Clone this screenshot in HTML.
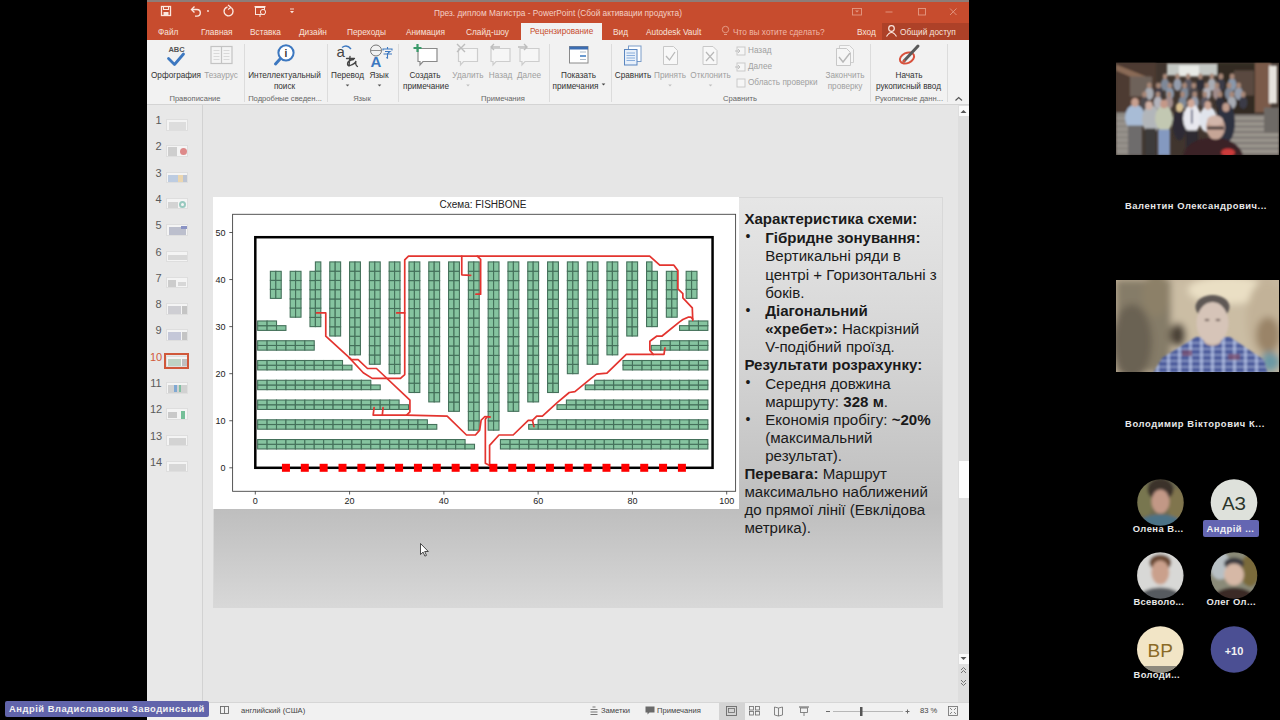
<!DOCTYPE html><html><head><meta charset="utf-8"><style>
*{margin:0;padding:0;box-sizing:border-box}
html,body{width:1280px;height:720px;overflow:hidden;background:#000;font-family:"Liberation Sans",sans-serif}
.a{position:absolute}
.t{position:absolute;white-space:nowrap;line-height:1}
svg{position:absolute;left:0;top:0}
</style></head><body>
<div class="a" style="left:147px;top:0;width:822px;height:720px;background:#e6e6e6"></div>
<div class="a" style="left:147px;top:0;width:822px;height:2px;background:#8d7d78"></div>
<div class="a" style="left:147px;top:2px;width:822px;height:38px;background:#c74c2e"></div>
<div class="a" style="left:882px;top:23px;width:87px;height:17px;background:#ad4128"></div>
<div class="a" style="left:521px;top:23px;width:81px;height:18px;background:#f2f2f2"></div>
<div class="a" style="left:147px;top:40px;width:822px;height:65px;background:#f2f2f2;border-bottom:1px solid #d4d4d4"></div>
<div class="t" style="left:158px;top:28px;font-size:8.3px;color:#f8e3dc;">Файл</div>
<div class="t" style="left:201px;top:28px;font-size:8.3px;color:#f8e3dc;">Главная</div>
<div class="t" style="left:250px;top:28px;font-size:8.3px;color:#f8e3dc;">Вставка</div>
<div class="t" style="left:299px;top:28px;font-size:8.3px;color:#f8e3dc;">Дизайн</div>
<div class="t" style="left:347px;top:28px;font-size:8.3px;color:#f8e3dc;">Переходы</div>
<div class="t" style="left:406px;top:28px;font-size:8.3px;color:#f8e3dc;">Анимация</div>
<div class="t" style="left:466px;top:28px;font-size:8.3px;color:#f8e3dc;">Слайд-шоу</div>
<div class="t" style="left:613px;top:28px;font-size:8.3px;color:#f8e3dc;">Вид</div>
<div class="t" style="left:646px;top:28px;font-size:8.3px;color:#f8e3dc;">Autodesk Vault</div>
<div class="t" style="left:733px;top:28px;font-size:8.3px;color:#f0b8a8;">Что вы хотите сделать?</div>
<div class="t" style="left:857px;top:28px;font-size:8.3px;color:#f8e3dc;">Вход</div>
<div class="t" style="left:900px;top:28px;font-size:8.3px;color:#f8e3dc;">Общий доступ</div>
<div class="t" style="left:530px;top:28px;font-size:8.2px;color:#c74c2e;">Рецензирование</div>
<div class="t" style="left:434px;top:9px;font-size:8.3px;color:#f3d0c5;">През. диплом Магистра - PowerPoint (Сбой активации продукта)</div>
<div class="t" style="left:176px;top:71.8px;font-size:8.2px;color:#333;transform:translateX(-50%);">Орфография</div>
<div class="t" style="left:221px;top:71.8px;font-size:8.2px;color:#a0a0a0;transform:translateX(-50%);">Тезаурус</div>
<div class="t" style="left:284.5px;top:71.8px;font-size:8.2px;color:#333;transform:translateX(-50%);">Интеллектуальный</div>
<div class="t" style="left:284.5px;top:82.8px;font-size:8.2px;color:#333;transform:translateX(-50%);">поиск</div>
<div class="t" style="left:347.5px;top:71.8px;font-size:8.2px;color:#333;transform:translateX(-50%);">Перевод</div>
<div class="t" style="left:379px;top:71.8px;font-size:8.2px;color:#333;transform:translateX(-50%);">Язык</div>
<div class="t" style="left:425px;top:71.8px;font-size:8.2px;color:#333;transform:translateX(-50%);">Создать</div>
<div class="t" style="left:426px;top:82.8px;font-size:8.2px;color:#333;transform:translateX(-50%);">примечание</div>
<div class="t" style="left:468px;top:71.8px;font-size:8.2px;color:#a0a0a0;transform:translateX(-50%);">Удалить</div>
<div class="t" style="left:500.5px;top:71.8px;font-size:8.2px;color:#a0a0a0;transform:translateX(-50%);">Назад</div>
<div class="t" style="left:529px;top:71.8px;font-size:8.2px;color:#a0a0a0;transform:translateX(-50%);">Далее</div>
<div class="t" style="left:578.5px;top:71.8px;font-size:8.2px;color:#333;transform:translateX(-50%);">Показать</div>
<div class="t" style="left:575.5px;top:82.8px;font-size:8.2px;color:#333;transform:translateX(-50%);">примечания</div>
<div class="t" style="left:633px;top:71.8px;font-size:8.2px;color:#333;transform:translateX(-50%);">Сравнить</div>
<div class="t" style="left:670px;top:71.8px;font-size:8.2px;color:#a0a0a0;transform:translateX(-50%);">Принять</div>
<div class="t" style="left:710.5px;top:71.8px;font-size:8.2px;color:#a0a0a0;transform:translateX(-50%);">Отклонить</div>
<div class="t" style="left:845px;top:71.8px;font-size:8.2px;color:#a0a0a0;transform:translateX(-50%);">Закончить</div>
<div class="t" style="left:845px;top:82.8px;font-size:8.2px;color:#a0a0a0;transform:translateX(-50%);">проверку</div>
<div class="t" style="left:909px;top:71.8px;font-size:8.2px;color:#333;transform:translateX(-50%);">Начать</div>
<div class="t" style="left:908.5px;top:82.8px;font-size:8.2px;color:#333;transform:translateX(-50%);">рукописный ввод</div>
<div class="t" style="left:748px;top:46.5px;font-size:8.2px;color:#a0a0a0;">Назад</div>
<div class="t" style="left:748px;top:62.5px;font-size:8.2px;color:#a0a0a0;">Далее</div>
<div class="t" style="left:748px;top:78.5px;font-size:8.2px;color:#a0a0a0;">Область проверки</div>
<div class="t" style="left:195px;top:95.2px;font-size:7.6px;color:#666;transform:translateX(-50%);">Правописание</div>
<div class="t" style="left:285px;top:95.2px;font-size:7.6px;color:#666;transform:translateX(-50%);">Подробные сведен...</div>
<div class="t" style="left:362px;top:95.2px;font-size:7.6px;color:#666;transform:translateX(-50%);">Язык</div>
<div class="t" style="left:503px;top:95.2px;font-size:7.6px;color:#666;transform:translateX(-50%);">Примечания</div>
<div class="t" style="left:740px;top:95.2px;font-size:7.6px;color:#666;transform:translateX(-50%);">Сравнить</div>
<div class="t" style="left:909px;top:95.2px;font-size:7.6px;color:#666;transform:translateX(-50%);">Рукописные данн...</div>
<div class="a" style="left:243.5px;top:44px;width:1px;height:58px;background:#dcdcdc"></div>
<div class="a" style="left:326.5px;top:44px;width:1px;height:58px;background:#dcdcdc"></div>
<div class="a" style="left:397.5px;top:44px;width:1px;height:58px;background:#dcdcdc"></div>
<div class="a" style="left:549px;top:44px;width:1px;height:58px;background:#dcdcdc"></div>
<div class="a" style="left:610.5px;top:44px;width:1px;height:58px;background:#dcdcdc"></div>
<div class="a" style="left:870px;top:44px;width:1px;height:58px;background:#dcdcdc"></div>
<div class="a" style="left:947px;top:44px;width:1px;height:58px;background:#dcdcdc"></div>
<div class="a" style="left:147px;top:105px;width:56px;height:598px;background:#e8e8e8;border-right:1px solid #d2d2d2"></div>
<div class="t" style="left:158.5px;top:115.0px;font-size:11px;color:#5a5a5a;transform:translateX(-50%);">1</div>
<div class="a" style="left:166px;top:119.0px;width:22px;height:11.5px;background:#f4f4f4;border:1px solid #dedede;overflow:hidden"><div style="position:absolute;left:0;top:0;width:20px;height:10px;opacity:0.62;filter:blur(0.4px)"><div style="position:absolute;left:2px;top:2px;width:17px;height:8px;background:#cfcfcf"></div></div></div>
<div class="t" style="left:158.5px;top:141.3px;font-size:11px;color:#5a5a5a;transform:translateX(-50%);">2</div>
<div class="a" style="left:166px;top:145.3px;width:22px;height:11.5px;background:#f4f4f4;border:1px solid #dedede;overflow:hidden"><div style="position:absolute;left:0;top:0;width:20px;height:10px;opacity:0.62;filter:blur(0.4px)"><div style="position:absolute;left:1px;top:1px;width:9px;height:10px;background:#b8b8b8"></div><div style="position:absolute;left:13px;top:2px;width:7px;height:7px;border-radius:50%;background:#d04848"></div></div></div>
<div class="t" style="left:158.5px;top:167.6px;font-size:11px;color:#5a5a5a;transform:translateX(-50%);">3</div>
<div class="a" style="left:166px;top:171.6px;width:22px;height:11.5px;background:#f4f4f4;border:1px solid #dedede;overflow:hidden"><div style="position:absolute;left:0;top:0;width:20px;height:10px;opacity:0.62;filter:blur(0.4px)"><div style="position:absolute;left:1px;top:2px;width:10px;height:8px;background:#9cb4d6"></div><div style="position:absolute;left:11px;top:2px;width:5px;height:8px;background:#e6c488"></div><div style="position:absolute;left:16px;top:2px;width:4px;height:8px;background:#9aa8c0"></div></div></div>
<div class="t" style="left:158.5px;top:193.9px;font-size:11px;color:#5a5a5a;transform:translateX(-50%);">4</div>
<div class="a" style="left:166px;top:197.9px;width:22px;height:11.5px;background:#f4f4f4;border:1px solid #dedede;overflow:hidden"><div style="position:absolute;left:0;top:0;width:20px;height:10px;opacity:0.62;filter:blur(0.4px)"><div style="position:absolute;left:1px;top:3px;width:10px;height:6px;background:#c0c0c0"></div><div style="position:absolute;left:12px;top:2px;width:7px;height:7px;border-radius:50%;border:2px solid #60b0a0"></div></div></div>
<div class="t" style="left:158.5px;top:220.2px;font-size:11px;color:#5a5a5a;transform:translateX(-50%);">5</div>
<div class="a" style="left:166px;top:224.2px;width:22px;height:11.5px;background:#f4f4f4;border:1px solid #dedede;overflow:hidden"><div style="position:absolute;left:0;top:0;width:20px;height:10px;opacity:0.62;filter:blur(0.4px)"><div style="position:absolute;left:2px;top:2px;width:17px;height:8px;background:#9aa0b6"></div><div style="position:absolute;left:14px;top:1px;width:6px;height:3px;background:#4a58a8"></div></div></div>
<div class="t" style="left:158.5px;top:246.5px;font-size:11px;color:#5a5a5a;transform:translateX(-50%);">6</div>
<div class="a" style="left:166px;top:250.5px;width:22px;height:11.5px;background:#f4f4f4;border:1px solid #dedede;overflow:hidden"><div style="position:absolute;left:0;top:0;width:20px;height:10px;opacity:0.62;filter:blur(0.4px)"><div style="position:absolute;left:1px;top:3px;width:19px;height:5px;background:#c8c8c8"></div></div></div>
<div class="t" style="left:158.5px;top:272.8px;font-size:11px;color:#5a5a5a;transform:translateX(-50%);">7</div>
<div class="a" style="left:166px;top:276.8px;width:22px;height:11.5px;background:#f4f4f4;border:1px solid #dedede;overflow:hidden"><div style="position:absolute;left:0;top:0;width:20px;height:10px;opacity:0.62;filter:blur(0.4px)"><div style="position:absolute;left:1px;top:2px;width:8px;height:8px;background:#b4b4b4"></div><div style="position:absolute;left:11px;top:4px;width:8px;height:4px;background:#c6c6c6"></div></div></div>
<div class="t" style="left:158.5px;top:299.1px;font-size:11px;color:#5a5a5a;transform:translateX(-50%);">8</div>
<div class="a" style="left:166px;top:303.1px;width:22px;height:11.5px;background:#f4f4f4;border:1px solid #dedede;overflow:hidden"><div style="position:absolute;left:0;top:0;width:20px;height:10px;opacity:0.62;filter:blur(0.4px)"><div style="position:absolute;left:1px;top:2px;width:13px;height:8px;background:#b8b8c0"></div><div style="position:absolute;left:15px;top:2px;width:5px;height:8px;background:#a8a8a8"></div></div></div>
<div class="t" style="left:158.5px;top:325.4px;font-size:11px;color:#5a5a5a;transform:translateX(-50%);">9</div>
<div class="a" style="left:166px;top:329.4px;width:22px;height:11.5px;background:#f4f4f4;border:1px solid #dedede;overflow:hidden"><div style="position:absolute;left:0;top:0;width:20px;height:10px;opacity:0.62;filter:blur(0.4px)"><div style="position:absolute;left:1px;top:2px;width:13px;height:8px;background:#a8acc8"></div><div style="position:absolute;left:15px;top:2px;width:5px;height:8px;background:#a8a8a8"></div></div></div>
<div class="t" style="left:156px;top:351.70000000000005px;font-size:11px;color:#d2583a;transform:translateX(-50%);">10</div>
<div class="a" style="left:166px;top:355.7px;width:22px;height:11.5px;background:#f4f4f4;border:1px solid #dedede;overflow:hidden"><div style="position:absolute;left:0;top:0;width:20px;height:10px;opacity:0.62;filter:blur(0.4px)"><div style="position:absolute;left:1px;top:2px;width:13px;height:8px;background:#9ec0a8"></div><div style="position:absolute;left:15px;top:2px;width:5px;height:8px;background:#a0a0a0"></div></div></div>
<div class="t" style="left:156px;top:378.0px;font-size:11px;color:#5a5a5a;transform:translateX(-50%);">11</div>
<div class="a" style="left:166px;top:382.0px;width:22px;height:11.5px;background:#f4f4f4;border:1px solid #dedede;overflow:hidden"><div style="position:absolute;left:0;top:0;width:20px;height:10px;opacity:0.62;filter:blur(0.4px)"><div style="position:absolute;left:1px;top:2px;width:19px;height:8px;background:#bcbcbc"></div><div style="position:absolute;left:7px;top:2px;width:3px;height:7px;background:#3a7ac0"></div><div style="position:absolute;left:12px;top:2px;width:2px;height:7px;background:#3aa070"></div></div></div>
<div class="t" style="left:156px;top:404.3px;font-size:11px;color:#5a5a5a;transform:translateX(-50%);">12</div>
<div class="a" style="left:166px;top:408.3px;width:22px;height:11.5px;background:#f4f4f4;border:1px solid #dedede;overflow:hidden"><div style="position:absolute;left:0;top:0;width:20px;height:10px;opacity:0.62;filter:blur(0.4px)"><div style="position:absolute;left:1px;top:3px;width:9px;height:6px;background:#b0b0b0"></div><div style="position:absolute;left:14px;top:2px;width:4px;height:8px;background:#28a060"></div></div></div>
<div class="t" style="left:156px;top:430.6px;font-size:11px;color:#5a5a5a;transform:translateX(-50%);">13</div>
<div class="a" style="left:166px;top:434.6px;width:22px;height:11.5px;background:#f4f4f4;border:1px solid #dedede;overflow:hidden"><div style="position:absolute;left:0;top:0;width:20px;height:10px;opacity:0.62;filter:blur(0.4px)"><div style="position:absolute;left:2px;top:2px;width:17px;height:8px;background:#c0c0c0"></div></div></div>
<div class="t" style="left:156px;top:456.90000000000003px;font-size:11px;color:#5a5a5a;transform:translateX(-50%);">14</div>
<div class="a" style="left:166px;top:460.9px;width:22px;height:11.5px;background:#f4f4f4;border:1px solid #dedede;overflow:hidden"><div style="position:absolute;left:0;top:0;width:20px;height:10px;opacity:0.62;filter:blur(0.4px)"><div style="position:absolute;left:2px;top:2px;width:17px;height:8px;background:#c6c6c6"></div></div></div>
<div class="a" style="left:164.3px;top:352.8px;width:25px;height:16px;border:2px solid #d0583a"></div>
<div class="a" style="left:204px;top:105px;width:754px;height:597px;background:#e6e6e6"></div>
<div class="a" style="left:213px;top:197px;width:730px;height:411px;background:linear-gradient(180deg,#e6e6e6 0%,#d4d4d4 40%,#bebebe 76%,#d8d8d8 100%);border:1px solid #d8d8d8"></div>
<div class="a" style="left:958px;top:105px;width:11px;height:597px;background:#dedede"></div>
<div class="a" style="left:958.5px;top:106px;width:10px;height:10px;background:#fafafa"></div>
<div class="a" style="left:958.5px;top:461px;width:10px;height:37px;background:#fdfdfd"></div>
<div class="a" style="left:958.5px;top:654px;width:10px;height:10px;background:#fafafa"></div>
<div class="a" style="left:147px;top:702px;width:822px;height:18px;background:#f1f1f1;border-top:1px solid #d6d6d6"></div>
<div class="t" style="left:241px;top:707px;font-size:7.6px;color:#444;">английский (США)</div>
<div class="t" style="left:601px;top:707px;font-size:7.6px;color:#444;">Заметки</div>
<div class="t" style="left:657px;top:707px;font-size:7.6px;color:#444;">Примечания</div>
<div class="t" style="left:920px;top:707px;font-size:7.6px;color:#444;">83 %</div>
<div class="a" style="left:719px;top:703px;width:26px;height:17px;background:#d4d4d4"></div>
<div class="t" style="left:744.4px;top:210.9px;font-size:15.1px;color:#1a1a1a"><b>Характеристика схеми:</b></div>
<div class="t" style="left:765.2px;top:229.8px;font-size:15.1px;color:#1a1a1a"><b>Гібридне зонування:</b></div>
<div class="t" style="left:765.2px;top:248.4px;font-size:15.1px;color:#1a1a1a">Вертикальні ряди в</div>
<div class="t" style="left:765.2px;top:266.6px;font-size:15.1px;color:#1a1a1a">центрі + Горизонтальні з</div>
<div class="t" style="left:765.2px;top:284.8px;font-size:15.1px;color:#1a1a1a">боків.</div>
<div class="t" style="left:765.2px;top:303.0px;font-size:15.1px;color:#1a1a1a"><b>Діагональний</b></div>
<div class="t" style="left:765.2px;top:321.2px;font-size:15.1px;color:#1a1a1a"><b>«хребет»:</b> Наскрізний</div>
<div class="t" style="left:765.2px;top:339.4px;font-size:15.1px;color:#1a1a1a">V-подібний проїзд.</div>
<div class="t" style="left:744.4px;top:357.4px;font-size:15.1px;color:#1a1a1a"><b>Результати розрахунку:</b></div>
<div class="t" style="left:765.2px;top:375.6px;font-size:15.1px;color:#1a1a1a">Середня довжина</div>
<div class="t" style="left:765.2px;top:393.8px;font-size:15.1px;color:#1a1a1a">маршруту: <b>328 м</b>.</div>
<div class="t" style="left:765.2px;top:412.2px;font-size:15.1px;color:#1a1a1a">Економія пробігу: <b>~20%</b></div>
<div class="t" style="left:765.2px;top:430.4px;font-size:15.1px;color:#1a1a1a">(максимальний</div>
<div class="t" style="left:765.2px;top:448.4px;font-size:15.1px;color:#1a1a1a">результат).</div>
<div class="t" style="left:744.4px;top:466.4px;font-size:15.1px;color:#1a1a1a"><b>Перевага:</b> Маршрут</div>
<div class="t" style="left:744.4px;top:484.4px;font-size:15.1px;color:#1a1a1a">максимально наближений</div>
<div class="t" style="left:744.4px;top:502.3px;font-size:15.1px;color:#1a1a1a">до прямої лінії (Евклідова</div>
<div class="t" style="left:744.4px;top:520.3px;font-size:15.1px;color:#1a1a1a">метрика).</div>
<div class="t" style="left:745.5px;top:229.3px;font-size:14px;color:#1a1a1a">•</div>
<div class="t" style="left:745.5px;top:302.5px;font-size:14px;color:#1a1a1a">•</div>
<div class="t" style="left:745.5px;top:375.1px;font-size:14px;color:#1a1a1a">•</div>
<div class="t" style="left:745.5px;top:411.7px;font-size:14px;color:#1a1a1a">•</div>
<svg width="1280" height="720" viewBox="0 0 1280 720" style="font-family:'Liberation Sans',sans-serif">
<rect x="213" y="197" width="526" height="312" fill="#ffffff"/>
<rect x="232.6" y="214.3" width="503" height="277" fill="none" stroke="#444" stroke-width="0.9"/>
<line x1="255.30" y1="491.2" x2="255.30" y2="494.5" stroke="#333" stroke-width="0.8"/>
<text x="255.30" y="504" font-size="9" text-anchor="middle" fill="#222">0</text>
<line x1="349.58" y1="491.2" x2="349.58" y2="494.5" stroke="#333" stroke-width="0.8"/>
<text x="349.58" y="504" font-size="9" text-anchor="middle" fill="#222">20</text>
<line x1="443.86" y1="491.2" x2="443.86" y2="494.5" stroke="#333" stroke-width="0.8"/>
<text x="443.86" y="504" font-size="9" text-anchor="middle" fill="#222">40</text>
<line x1="538.14" y1="491.2" x2="538.14" y2="494.5" stroke="#333" stroke-width="0.8"/>
<text x="538.14" y="504" font-size="9" text-anchor="middle" fill="#222">60</text>
<line x1="632.42" y1="491.2" x2="632.42" y2="494.5" stroke="#333" stroke-width="0.8"/>
<text x="632.42" y="504" font-size="9" text-anchor="middle" fill="#222">80</text>
<line x1="726.70" y1="491.2" x2="726.70" y2="494.5" stroke="#333" stroke-width="0.8"/>
<text x="726.70" y="504" font-size="9" text-anchor="middle" fill="#222">100</text>
<line x1="229.3" y1="467.80" x2="232.6" y2="467.80" stroke="#333" stroke-width="0.8"/>
<text x="225.5" y="471.00" font-size="9" text-anchor="end" fill="#222">0</text>
<line x1="229.3" y1="420.74" x2="232.6" y2="420.74" stroke="#333" stroke-width="0.8"/>
<text x="225.5" y="423.94" font-size="9" text-anchor="end" fill="#222">10</text>
<line x1="229.3" y1="373.68" x2="232.6" y2="373.68" stroke="#333" stroke-width="0.8"/>
<text x="225.5" y="376.88" font-size="9" text-anchor="end" fill="#222">20</text>
<line x1="229.3" y1="326.62" x2="232.6" y2="326.62" stroke="#333" stroke-width="0.8"/>
<text x="225.5" y="329.82" font-size="9" text-anchor="end" fill="#222">30</text>
<line x1="229.3" y1="279.56" x2="232.6" y2="279.56" stroke="#333" stroke-width="0.8"/>
<text x="225.5" y="282.76" font-size="9" text-anchor="end" fill="#222">40</text>
<line x1="229.3" y1="232.50" x2="232.6" y2="232.50" stroke="#333" stroke-width="0.8"/>
<text x="225.5" y="235.70" font-size="9" text-anchor="end" fill="#222">50</text>
<text x="483" y="208" font-size="10" text-anchor="middle" fill="#222">Схема: FISHBONE</text>
<rect x="270.38" y="289.36" width="5.42" height="9.02" fill="#86c4a0" stroke="#44705a" stroke-width="1.1"/>
<rect x="270.38" y="280.34" width="5.42" height="9.02" fill="#86c4a0" stroke="#44705a" stroke-width="1.1"/>
<rect x="270.38" y="271.32" width="5.42" height="9.02" fill="#86c4a0" stroke="#44705a" stroke-width="1.1"/>
<rect x="275.81" y="289.36" width="5.42" height="9.02" fill="#86c4a0" stroke="#44705a" stroke-width="1.1"/>
<rect x="275.81" y="280.34" width="5.42" height="9.02" fill="#86c4a0" stroke="#44705a" stroke-width="1.1"/>
<rect x="275.81" y="271.32" width="5.42" height="9.02" fill="#86c4a0" stroke="#44705a" stroke-width="1.1"/>
<rect x="290.18" y="308.03" width="5.42" height="9.18" fill="#86c4a0" stroke="#44705a" stroke-width="1.1"/>
<rect x="290.18" y="298.85" width="5.42" height="9.18" fill="#86c4a0" stroke="#44705a" stroke-width="1.1"/>
<rect x="290.18" y="289.68" width="5.42" height="9.18" fill="#86c4a0" stroke="#44705a" stroke-width="1.1"/>
<rect x="290.18" y="280.50" width="5.42" height="9.18" fill="#86c4a0" stroke="#44705a" stroke-width="1.1"/>
<rect x="290.18" y="271.32" width="5.42" height="9.18" fill="#86c4a0" stroke="#44705a" stroke-width="1.1"/>
<rect x="295.60" y="308.03" width="5.42" height="9.18" fill="#86c4a0" stroke="#44705a" stroke-width="1.1"/>
<rect x="295.60" y="298.85" width="5.42" height="9.18" fill="#86c4a0" stroke="#44705a" stroke-width="1.1"/>
<rect x="295.60" y="289.68" width="5.42" height="9.18" fill="#86c4a0" stroke="#44705a" stroke-width="1.1"/>
<rect x="295.60" y="280.50" width="5.42" height="9.18" fill="#86c4a0" stroke="#44705a" stroke-width="1.1"/>
<rect x="295.60" y="271.32" width="5.42" height="9.18" fill="#86c4a0" stroke="#44705a" stroke-width="1.1"/>
<rect x="309.98" y="317.40" width="5.42" height="9.22" fill="#86c4a0" stroke="#44705a" stroke-width="1.1"/>
<rect x="309.98" y="308.19" width="5.42" height="9.22" fill="#86c4a0" stroke="#44705a" stroke-width="1.1"/>
<rect x="309.98" y="298.97" width="5.42" height="9.22" fill="#86c4a0" stroke="#44705a" stroke-width="1.1"/>
<rect x="309.98" y="289.76" width="5.42" height="9.22" fill="#86c4a0" stroke="#44705a" stroke-width="1.1"/>
<rect x="309.98" y="280.54" width="5.42" height="9.22" fill="#86c4a0" stroke="#44705a" stroke-width="1.1"/>
<rect x="309.98" y="271.32" width="5.42" height="9.22" fill="#86c4a0" stroke="#44705a" stroke-width="1.1"/>
<rect x="315.40" y="317.38" width="5.42" height="9.24" fill="#86c4a0" stroke="#44705a" stroke-width="1.1"/>
<rect x="315.40" y="308.13" width="5.42" height="9.24" fill="#86c4a0" stroke="#44705a" stroke-width="1.1"/>
<rect x="315.40" y="298.89" width="5.42" height="9.24" fill="#86c4a0" stroke="#44705a" stroke-width="1.1"/>
<rect x="315.40" y="289.64" width="5.42" height="9.24" fill="#86c4a0" stroke="#44705a" stroke-width="1.1"/>
<rect x="315.40" y="280.40" width="5.42" height="9.24" fill="#86c4a0" stroke="#44705a" stroke-width="1.1"/>
<rect x="315.40" y="271.16" width="5.42" height="9.24" fill="#86c4a0" stroke="#44705a" stroke-width="1.1"/>
<rect x="315.40" y="261.91" width="5.42" height="9.24" fill="#86c4a0" stroke="#44705a" stroke-width="1.1"/>
<rect x="329.78" y="326.77" width="5.42" height="9.26" fill="#86c4a0" stroke="#44705a" stroke-width="1.1"/>
<rect x="329.78" y="317.50" width="5.42" height="9.26" fill="#86c4a0" stroke="#44705a" stroke-width="1.1"/>
<rect x="329.78" y="308.24" width="5.42" height="9.26" fill="#86c4a0" stroke="#44705a" stroke-width="1.1"/>
<rect x="329.78" y="298.97" width="5.42" height="9.26" fill="#86c4a0" stroke="#44705a" stroke-width="1.1"/>
<rect x="329.78" y="289.71" width="5.42" height="9.26" fill="#86c4a0" stroke="#44705a" stroke-width="1.1"/>
<rect x="329.78" y="280.44" width="5.42" height="9.26" fill="#86c4a0" stroke="#44705a" stroke-width="1.1"/>
<rect x="329.78" y="271.18" width="5.42" height="9.26" fill="#86c4a0" stroke="#44705a" stroke-width="1.1"/>
<rect x="329.78" y="261.91" width="5.42" height="9.26" fill="#86c4a0" stroke="#44705a" stroke-width="1.1"/>
<rect x="335.20" y="326.77" width="5.42" height="9.26" fill="#86c4a0" stroke="#44705a" stroke-width="1.1"/>
<rect x="335.20" y="317.50" width="5.42" height="9.26" fill="#86c4a0" stroke="#44705a" stroke-width="1.1"/>
<rect x="335.20" y="308.24" width="5.42" height="9.26" fill="#86c4a0" stroke="#44705a" stroke-width="1.1"/>
<rect x="335.20" y="298.97" width="5.42" height="9.26" fill="#86c4a0" stroke="#44705a" stroke-width="1.1"/>
<rect x="335.20" y="289.71" width="5.42" height="9.26" fill="#86c4a0" stroke="#44705a" stroke-width="1.1"/>
<rect x="335.20" y="280.44" width="5.42" height="9.26" fill="#86c4a0" stroke="#44705a" stroke-width="1.1"/>
<rect x="335.20" y="271.18" width="5.42" height="9.26" fill="#86c4a0" stroke="#44705a" stroke-width="1.1"/>
<rect x="335.20" y="261.91" width="5.42" height="9.26" fill="#86c4a0" stroke="#44705a" stroke-width="1.1"/>
<rect x="349.58" y="345.56" width="5.42" height="9.29" fill="#86c4a0" stroke="#44705a" stroke-width="1.1"/>
<rect x="349.58" y="336.27" width="5.42" height="9.29" fill="#86c4a0" stroke="#44705a" stroke-width="1.1"/>
<rect x="349.58" y="326.97" width="5.42" height="9.29" fill="#86c4a0" stroke="#44705a" stroke-width="1.1"/>
<rect x="349.58" y="317.68" width="5.42" height="9.29" fill="#86c4a0" stroke="#44705a" stroke-width="1.1"/>
<rect x="349.58" y="308.38" width="5.42" height="9.29" fill="#86c4a0" stroke="#44705a" stroke-width="1.1"/>
<rect x="349.58" y="299.09" width="5.42" height="9.29" fill="#86c4a0" stroke="#44705a" stroke-width="1.1"/>
<rect x="349.58" y="289.80" width="5.42" height="9.29" fill="#86c4a0" stroke="#44705a" stroke-width="1.1"/>
<rect x="349.58" y="280.50" width="5.42" height="9.29" fill="#86c4a0" stroke="#44705a" stroke-width="1.1"/>
<rect x="349.58" y="271.21" width="5.42" height="9.29" fill="#86c4a0" stroke="#44705a" stroke-width="1.1"/>
<rect x="349.58" y="261.91" width="5.42" height="9.29" fill="#86c4a0" stroke="#44705a" stroke-width="1.1"/>
<rect x="355.00" y="345.56" width="5.42" height="9.29" fill="#86c4a0" stroke="#44705a" stroke-width="1.1"/>
<rect x="355.00" y="336.27" width="5.42" height="9.29" fill="#86c4a0" stroke="#44705a" stroke-width="1.1"/>
<rect x="355.00" y="326.97" width="5.42" height="9.29" fill="#86c4a0" stroke="#44705a" stroke-width="1.1"/>
<rect x="355.00" y="317.68" width="5.42" height="9.29" fill="#86c4a0" stroke="#44705a" stroke-width="1.1"/>
<rect x="355.00" y="308.38" width="5.42" height="9.29" fill="#86c4a0" stroke="#44705a" stroke-width="1.1"/>
<rect x="355.00" y="299.09" width="5.42" height="9.29" fill="#86c4a0" stroke="#44705a" stroke-width="1.1"/>
<rect x="355.00" y="289.80" width="5.42" height="9.29" fill="#86c4a0" stroke="#44705a" stroke-width="1.1"/>
<rect x="355.00" y="280.50" width="5.42" height="9.29" fill="#86c4a0" stroke="#44705a" stroke-width="1.1"/>
<rect x="355.00" y="271.21" width="5.42" height="9.29" fill="#86c4a0" stroke="#44705a" stroke-width="1.1"/>
<rect x="355.00" y="261.91" width="5.42" height="9.29" fill="#86c4a0" stroke="#44705a" stroke-width="1.1"/>
<rect x="369.38" y="354.96" width="5.42" height="9.31" fill="#86c4a0" stroke="#44705a" stroke-width="1.1"/>
<rect x="369.38" y="345.66" width="5.42" height="9.31" fill="#86c4a0" stroke="#44705a" stroke-width="1.1"/>
<rect x="369.38" y="336.35" width="5.42" height="9.31" fill="#86c4a0" stroke="#44705a" stroke-width="1.1"/>
<rect x="369.38" y="327.05" width="5.42" height="9.31" fill="#86c4a0" stroke="#44705a" stroke-width="1.1"/>
<rect x="369.38" y="317.74" width="5.42" height="9.31" fill="#86c4a0" stroke="#44705a" stroke-width="1.1"/>
<rect x="369.38" y="308.44" width="5.42" height="9.31" fill="#86c4a0" stroke="#44705a" stroke-width="1.1"/>
<rect x="369.38" y="299.13" width="5.42" height="9.31" fill="#86c4a0" stroke="#44705a" stroke-width="1.1"/>
<rect x="369.38" y="289.83" width="5.42" height="9.31" fill="#86c4a0" stroke="#44705a" stroke-width="1.1"/>
<rect x="369.38" y="280.52" width="5.42" height="9.31" fill="#86c4a0" stroke="#44705a" stroke-width="1.1"/>
<rect x="369.38" y="271.22" width="5.42" height="9.31" fill="#86c4a0" stroke="#44705a" stroke-width="1.1"/>
<rect x="369.38" y="261.91" width="5.42" height="9.31" fill="#86c4a0" stroke="#44705a" stroke-width="1.1"/>
<rect x="374.80" y="354.96" width="5.42" height="9.31" fill="#86c4a0" stroke="#44705a" stroke-width="1.1"/>
<rect x="374.80" y="345.66" width="5.42" height="9.31" fill="#86c4a0" stroke="#44705a" stroke-width="1.1"/>
<rect x="374.80" y="336.35" width="5.42" height="9.31" fill="#86c4a0" stroke="#44705a" stroke-width="1.1"/>
<rect x="374.80" y="327.05" width="5.42" height="9.31" fill="#86c4a0" stroke="#44705a" stroke-width="1.1"/>
<rect x="374.80" y="317.74" width="5.42" height="9.31" fill="#86c4a0" stroke="#44705a" stroke-width="1.1"/>
<rect x="374.80" y="308.44" width="5.42" height="9.31" fill="#86c4a0" stroke="#44705a" stroke-width="1.1"/>
<rect x="374.80" y="299.13" width="5.42" height="9.31" fill="#86c4a0" stroke="#44705a" stroke-width="1.1"/>
<rect x="374.80" y="289.83" width="5.42" height="9.31" fill="#86c4a0" stroke="#44705a" stroke-width="1.1"/>
<rect x="374.80" y="280.52" width="5.42" height="9.31" fill="#86c4a0" stroke="#44705a" stroke-width="1.1"/>
<rect x="374.80" y="271.22" width="5.42" height="9.31" fill="#86c4a0" stroke="#44705a" stroke-width="1.1"/>
<rect x="374.80" y="261.91" width="5.42" height="9.31" fill="#86c4a0" stroke="#44705a" stroke-width="1.1"/>
<rect x="389.18" y="364.37" width="5.42" height="9.31" fill="#86c4a0" stroke="#44705a" stroke-width="1.1"/>
<rect x="389.18" y="355.05" width="5.42" height="9.31" fill="#86c4a0" stroke="#44705a" stroke-width="1.1"/>
<rect x="389.18" y="345.74" width="5.42" height="9.31" fill="#86c4a0" stroke="#44705a" stroke-width="1.1"/>
<rect x="389.18" y="336.42" width="5.42" height="9.31" fill="#86c4a0" stroke="#44705a" stroke-width="1.1"/>
<rect x="389.18" y="327.11" width="5.42" height="9.31" fill="#86c4a0" stroke="#44705a" stroke-width="1.1"/>
<rect x="389.18" y="317.80" width="5.42" height="9.31" fill="#86c4a0" stroke="#44705a" stroke-width="1.1"/>
<rect x="389.18" y="308.48" width="5.42" height="9.31" fill="#86c4a0" stroke="#44705a" stroke-width="1.1"/>
<rect x="389.18" y="299.17" width="5.42" height="9.31" fill="#86c4a0" stroke="#44705a" stroke-width="1.1"/>
<rect x="389.18" y="289.85" width="5.42" height="9.31" fill="#86c4a0" stroke="#44705a" stroke-width="1.1"/>
<rect x="389.18" y="280.54" width="5.42" height="9.31" fill="#86c4a0" stroke="#44705a" stroke-width="1.1"/>
<rect x="389.18" y="271.23" width="5.42" height="9.31" fill="#86c4a0" stroke="#44705a" stroke-width="1.1"/>
<rect x="389.18" y="261.91" width="5.42" height="9.31" fill="#86c4a0" stroke="#44705a" stroke-width="1.1"/>
<rect x="394.60" y="364.37" width="5.42" height="9.31" fill="#86c4a0" stroke="#44705a" stroke-width="1.1"/>
<rect x="394.60" y="355.05" width="5.42" height="9.31" fill="#86c4a0" stroke="#44705a" stroke-width="1.1"/>
<rect x="394.60" y="345.74" width="5.42" height="9.31" fill="#86c4a0" stroke="#44705a" stroke-width="1.1"/>
<rect x="394.60" y="336.42" width="5.42" height="9.31" fill="#86c4a0" stroke="#44705a" stroke-width="1.1"/>
<rect x="394.60" y="327.11" width="5.42" height="9.31" fill="#86c4a0" stroke="#44705a" stroke-width="1.1"/>
<rect x="394.60" y="317.80" width="5.42" height="9.31" fill="#86c4a0" stroke="#44705a" stroke-width="1.1"/>
<rect x="394.60" y="308.48" width="5.42" height="9.31" fill="#86c4a0" stroke="#44705a" stroke-width="1.1"/>
<rect x="394.60" y="299.17" width="5.42" height="9.31" fill="#86c4a0" stroke="#44705a" stroke-width="1.1"/>
<rect x="394.60" y="289.85" width="5.42" height="9.31" fill="#86c4a0" stroke="#44705a" stroke-width="1.1"/>
<rect x="394.60" y="280.54" width="5.42" height="9.31" fill="#86c4a0" stroke="#44705a" stroke-width="1.1"/>
<rect x="394.60" y="271.23" width="5.42" height="9.31" fill="#86c4a0" stroke="#44705a" stroke-width="1.1"/>
<rect x="394.60" y="261.91" width="5.42" height="9.31" fill="#86c4a0" stroke="#44705a" stroke-width="1.1"/>
<rect x="408.98" y="383.18" width="5.42" height="9.33" fill="#86c4a0" stroke="#44705a" stroke-width="1.1"/>
<rect x="408.98" y="373.85" width="5.42" height="9.33" fill="#86c4a0" stroke="#44705a" stroke-width="1.1"/>
<rect x="408.98" y="364.52" width="5.42" height="9.33" fill="#86c4a0" stroke="#44705a" stroke-width="1.1"/>
<rect x="408.98" y="355.19" width="5.42" height="9.33" fill="#86c4a0" stroke="#44705a" stroke-width="1.1"/>
<rect x="408.98" y="345.86" width="5.42" height="9.33" fill="#86c4a0" stroke="#44705a" stroke-width="1.1"/>
<rect x="408.98" y="336.54" width="5.42" height="9.33" fill="#86c4a0" stroke="#44705a" stroke-width="1.1"/>
<rect x="408.98" y="327.21" width="5.42" height="9.33" fill="#86c4a0" stroke="#44705a" stroke-width="1.1"/>
<rect x="408.98" y="317.88" width="5.42" height="9.33" fill="#86c4a0" stroke="#44705a" stroke-width="1.1"/>
<rect x="408.98" y="308.55" width="5.42" height="9.33" fill="#86c4a0" stroke="#44705a" stroke-width="1.1"/>
<rect x="408.98" y="299.22" width="5.42" height="9.33" fill="#86c4a0" stroke="#44705a" stroke-width="1.1"/>
<rect x="408.98" y="289.90" width="5.42" height="9.33" fill="#86c4a0" stroke="#44705a" stroke-width="1.1"/>
<rect x="408.98" y="280.57" width="5.42" height="9.33" fill="#86c4a0" stroke="#44705a" stroke-width="1.1"/>
<rect x="408.98" y="271.24" width="5.42" height="9.33" fill="#86c4a0" stroke="#44705a" stroke-width="1.1"/>
<rect x="408.98" y="261.91" width="5.42" height="9.33" fill="#86c4a0" stroke="#44705a" stroke-width="1.1"/>
<rect x="414.40" y="383.18" width="5.42" height="9.33" fill="#86c4a0" stroke="#44705a" stroke-width="1.1"/>
<rect x="414.40" y="373.85" width="5.42" height="9.33" fill="#86c4a0" stroke="#44705a" stroke-width="1.1"/>
<rect x="414.40" y="364.52" width="5.42" height="9.33" fill="#86c4a0" stroke="#44705a" stroke-width="1.1"/>
<rect x="414.40" y="355.19" width="5.42" height="9.33" fill="#86c4a0" stroke="#44705a" stroke-width="1.1"/>
<rect x="414.40" y="345.86" width="5.42" height="9.33" fill="#86c4a0" stroke="#44705a" stroke-width="1.1"/>
<rect x="414.40" y="336.54" width="5.42" height="9.33" fill="#86c4a0" stroke="#44705a" stroke-width="1.1"/>
<rect x="414.40" y="327.21" width="5.42" height="9.33" fill="#86c4a0" stroke="#44705a" stroke-width="1.1"/>
<rect x="414.40" y="317.88" width="5.42" height="9.33" fill="#86c4a0" stroke="#44705a" stroke-width="1.1"/>
<rect x="414.40" y="308.55" width="5.42" height="9.33" fill="#86c4a0" stroke="#44705a" stroke-width="1.1"/>
<rect x="414.40" y="299.22" width="5.42" height="9.33" fill="#86c4a0" stroke="#44705a" stroke-width="1.1"/>
<rect x="414.40" y="289.90" width="5.42" height="9.33" fill="#86c4a0" stroke="#44705a" stroke-width="1.1"/>
<rect x="414.40" y="280.57" width="5.42" height="9.33" fill="#86c4a0" stroke="#44705a" stroke-width="1.1"/>
<rect x="414.40" y="271.24" width="5.42" height="9.33" fill="#86c4a0" stroke="#44705a" stroke-width="1.1"/>
<rect x="414.40" y="261.91" width="5.42" height="9.33" fill="#86c4a0" stroke="#44705a" stroke-width="1.1"/>
<rect x="428.78" y="392.58" width="5.42" height="9.33" fill="#86c4a0" stroke="#44705a" stroke-width="1.1"/>
<rect x="428.78" y="383.25" width="5.42" height="9.33" fill="#86c4a0" stroke="#44705a" stroke-width="1.1"/>
<rect x="428.78" y="373.92" width="5.42" height="9.33" fill="#86c4a0" stroke="#44705a" stroke-width="1.1"/>
<rect x="428.78" y="364.58" width="5.42" height="9.33" fill="#86c4a0" stroke="#44705a" stroke-width="1.1"/>
<rect x="428.78" y="355.25" width="5.42" height="9.33" fill="#86c4a0" stroke="#44705a" stroke-width="1.1"/>
<rect x="428.78" y="345.91" width="5.42" height="9.33" fill="#86c4a0" stroke="#44705a" stroke-width="1.1"/>
<rect x="428.78" y="336.58" width="5.42" height="9.33" fill="#86c4a0" stroke="#44705a" stroke-width="1.1"/>
<rect x="428.78" y="327.25" width="5.42" height="9.33" fill="#86c4a0" stroke="#44705a" stroke-width="1.1"/>
<rect x="428.78" y="317.91" width="5.42" height="9.33" fill="#86c4a0" stroke="#44705a" stroke-width="1.1"/>
<rect x="428.78" y="308.58" width="5.42" height="9.33" fill="#86c4a0" stroke="#44705a" stroke-width="1.1"/>
<rect x="428.78" y="299.25" width="5.42" height="9.33" fill="#86c4a0" stroke="#44705a" stroke-width="1.1"/>
<rect x="428.78" y="289.91" width="5.42" height="9.33" fill="#86c4a0" stroke="#44705a" stroke-width="1.1"/>
<rect x="428.78" y="280.58" width="5.42" height="9.33" fill="#86c4a0" stroke="#44705a" stroke-width="1.1"/>
<rect x="428.78" y="271.25" width="5.42" height="9.33" fill="#86c4a0" stroke="#44705a" stroke-width="1.1"/>
<rect x="428.78" y="261.91" width="5.42" height="9.33" fill="#86c4a0" stroke="#44705a" stroke-width="1.1"/>
<rect x="434.20" y="392.58" width="5.42" height="9.33" fill="#86c4a0" stroke="#44705a" stroke-width="1.1"/>
<rect x="434.20" y="383.25" width="5.42" height="9.33" fill="#86c4a0" stroke="#44705a" stroke-width="1.1"/>
<rect x="434.20" y="373.92" width="5.42" height="9.33" fill="#86c4a0" stroke="#44705a" stroke-width="1.1"/>
<rect x="434.20" y="364.58" width="5.42" height="9.33" fill="#86c4a0" stroke="#44705a" stroke-width="1.1"/>
<rect x="434.20" y="355.25" width="5.42" height="9.33" fill="#86c4a0" stroke="#44705a" stroke-width="1.1"/>
<rect x="434.20" y="345.91" width="5.42" height="9.33" fill="#86c4a0" stroke="#44705a" stroke-width="1.1"/>
<rect x="434.20" y="336.58" width="5.42" height="9.33" fill="#86c4a0" stroke="#44705a" stroke-width="1.1"/>
<rect x="434.20" y="327.25" width="5.42" height="9.33" fill="#86c4a0" stroke="#44705a" stroke-width="1.1"/>
<rect x="434.20" y="317.91" width="5.42" height="9.33" fill="#86c4a0" stroke="#44705a" stroke-width="1.1"/>
<rect x="434.20" y="308.58" width="5.42" height="9.33" fill="#86c4a0" stroke="#44705a" stroke-width="1.1"/>
<rect x="434.20" y="299.25" width="5.42" height="9.33" fill="#86c4a0" stroke="#44705a" stroke-width="1.1"/>
<rect x="434.20" y="289.91" width="5.42" height="9.33" fill="#86c4a0" stroke="#44705a" stroke-width="1.1"/>
<rect x="434.20" y="280.58" width="5.42" height="9.33" fill="#86c4a0" stroke="#44705a" stroke-width="1.1"/>
<rect x="434.20" y="271.25" width="5.42" height="9.33" fill="#86c4a0" stroke="#44705a" stroke-width="1.1"/>
<rect x="434.20" y="261.91" width="5.42" height="9.33" fill="#86c4a0" stroke="#44705a" stroke-width="1.1"/>
<rect x="448.57" y="401.99" width="5.42" height="9.34" fill="#86c4a0" stroke="#44705a" stroke-width="1.1"/>
<rect x="448.57" y="392.65" width="5.42" height="9.34" fill="#86c4a0" stroke="#44705a" stroke-width="1.1"/>
<rect x="448.57" y="383.31" width="5.42" height="9.34" fill="#86c4a0" stroke="#44705a" stroke-width="1.1"/>
<rect x="448.57" y="373.97" width="5.42" height="9.34" fill="#86c4a0" stroke="#44705a" stroke-width="1.1"/>
<rect x="448.57" y="364.64" width="5.42" height="9.34" fill="#86c4a0" stroke="#44705a" stroke-width="1.1"/>
<rect x="448.57" y="355.30" width="5.42" height="9.34" fill="#86c4a0" stroke="#44705a" stroke-width="1.1"/>
<rect x="448.57" y="345.96" width="5.42" height="9.34" fill="#86c4a0" stroke="#44705a" stroke-width="1.1"/>
<rect x="448.57" y="336.62" width="5.42" height="9.34" fill="#86c4a0" stroke="#44705a" stroke-width="1.1"/>
<rect x="448.57" y="327.28" width="5.42" height="9.34" fill="#86c4a0" stroke="#44705a" stroke-width="1.1"/>
<rect x="448.57" y="317.94" width="5.42" height="9.34" fill="#86c4a0" stroke="#44705a" stroke-width="1.1"/>
<rect x="448.57" y="308.60" width="5.42" height="9.34" fill="#86c4a0" stroke="#44705a" stroke-width="1.1"/>
<rect x="448.57" y="299.27" width="5.42" height="9.34" fill="#86c4a0" stroke="#44705a" stroke-width="1.1"/>
<rect x="448.57" y="289.93" width="5.42" height="9.34" fill="#86c4a0" stroke="#44705a" stroke-width="1.1"/>
<rect x="448.57" y="280.59" width="5.42" height="9.34" fill="#86c4a0" stroke="#44705a" stroke-width="1.1"/>
<rect x="448.57" y="271.25" width="5.42" height="9.34" fill="#86c4a0" stroke="#44705a" stroke-width="1.1"/>
<rect x="448.57" y="261.91" width="5.42" height="9.34" fill="#86c4a0" stroke="#44705a" stroke-width="1.1"/>
<rect x="454.00" y="401.99" width="5.42" height="9.34" fill="#86c4a0" stroke="#44705a" stroke-width="1.1"/>
<rect x="454.00" y="392.65" width="5.42" height="9.34" fill="#86c4a0" stroke="#44705a" stroke-width="1.1"/>
<rect x="454.00" y="383.31" width="5.42" height="9.34" fill="#86c4a0" stroke="#44705a" stroke-width="1.1"/>
<rect x="454.00" y="373.97" width="5.42" height="9.34" fill="#86c4a0" stroke="#44705a" stroke-width="1.1"/>
<rect x="454.00" y="364.64" width="5.42" height="9.34" fill="#86c4a0" stroke="#44705a" stroke-width="1.1"/>
<rect x="454.00" y="355.30" width="5.42" height="9.34" fill="#86c4a0" stroke="#44705a" stroke-width="1.1"/>
<rect x="454.00" y="345.96" width="5.42" height="9.34" fill="#86c4a0" stroke="#44705a" stroke-width="1.1"/>
<rect x="454.00" y="336.62" width="5.42" height="9.34" fill="#86c4a0" stroke="#44705a" stroke-width="1.1"/>
<rect x="454.00" y="327.28" width="5.42" height="9.34" fill="#86c4a0" stroke="#44705a" stroke-width="1.1"/>
<rect x="454.00" y="317.94" width="5.42" height="9.34" fill="#86c4a0" stroke="#44705a" stroke-width="1.1"/>
<rect x="454.00" y="308.60" width="5.42" height="9.34" fill="#86c4a0" stroke="#44705a" stroke-width="1.1"/>
<rect x="454.00" y="299.27" width="5.42" height="9.34" fill="#86c4a0" stroke="#44705a" stroke-width="1.1"/>
<rect x="454.00" y="289.93" width="5.42" height="9.34" fill="#86c4a0" stroke="#44705a" stroke-width="1.1"/>
<rect x="454.00" y="280.59" width="5.42" height="9.34" fill="#86c4a0" stroke="#44705a" stroke-width="1.1"/>
<rect x="454.00" y="271.25" width="5.42" height="9.34" fill="#86c4a0" stroke="#44705a" stroke-width="1.1"/>
<rect x="454.00" y="261.91" width="5.42" height="9.34" fill="#86c4a0" stroke="#44705a" stroke-width="1.1"/>
<rect x="468.37" y="420.81" width="5.42" height="9.35" fill="#86c4a0" stroke="#44705a" stroke-width="1.1"/>
<rect x="468.37" y="411.46" width="5.42" height="9.35" fill="#86c4a0" stroke="#44705a" stroke-width="1.1"/>
<rect x="468.37" y="402.11" width="5.42" height="9.35" fill="#86c4a0" stroke="#44705a" stroke-width="1.1"/>
<rect x="468.37" y="392.77" width="5.42" height="9.35" fill="#86c4a0" stroke="#44705a" stroke-width="1.1"/>
<rect x="468.37" y="383.42" width="5.42" height="9.35" fill="#86c4a0" stroke="#44705a" stroke-width="1.1"/>
<rect x="468.37" y="374.07" width="5.42" height="9.35" fill="#86c4a0" stroke="#44705a" stroke-width="1.1"/>
<rect x="468.37" y="364.73" width="5.42" height="9.35" fill="#86c4a0" stroke="#44705a" stroke-width="1.1"/>
<rect x="468.37" y="355.38" width="5.42" height="9.35" fill="#86c4a0" stroke="#44705a" stroke-width="1.1"/>
<rect x="468.37" y="346.03" width="5.42" height="9.35" fill="#86c4a0" stroke="#44705a" stroke-width="1.1"/>
<rect x="468.37" y="336.69" width="5.42" height="9.35" fill="#86c4a0" stroke="#44705a" stroke-width="1.1"/>
<rect x="468.37" y="327.34" width="5.42" height="9.35" fill="#86c4a0" stroke="#44705a" stroke-width="1.1"/>
<rect x="468.37" y="317.99" width="5.42" height="9.35" fill="#86c4a0" stroke="#44705a" stroke-width="1.1"/>
<rect x="468.37" y="308.65" width="5.42" height="9.35" fill="#86c4a0" stroke="#44705a" stroke-width="1.1"/>
<rect x="468.37" y="299.30" width="5.42" height="9.35" fill="#86c4a0" stroke="#44705a" stroke-width="1.1"/>
<rect x="468.37" y="289.95" width="5.42" height="9.35" fill="#86c4a0" stroke="#44705a" stroke-width="1.1"/>
<rect x="468.37" y="280.61" width="5.42" height="9.35" fill="#86c4a0" stroke="#44705a" stroke-width="1.1"/>
<rect x="468.37" y="271.26" width="5.42" height="9.35" fill="#86c4a0" stroke="#44705a" stroke-width="1.1"/>
<rect x="468.37" y="261.91" width="5.42" height="9.35" fill="#86c4a0" stroke="#44705a" stroke-width="1.1"/>
<rect x="473.79" y="420.81" width="5.42" height="9.35" fill="#86c4a0" stroke="#44705a" stroke-width="1.1"/>
<rect x="473.79" y="411.46" width="5.42" height="9.35" fill="#86c4a0" stroke="#44705a" stroke-width="1.1"/>
<rect x="473.79" y="402.11" width="5.42" height="9.35" fill="#86c4a0" stroke="#44705a" stroke-width="1.1"/>
<rect x="473.79" y="392.77" width="5.42" height="9.35" fill="#86c4a0" stroke="#44705a" stroke-width="1.1"/>
<rect x="473.79" y="383.42" width="5.42" height="9.35" fill="#86c4a0" stroke="#44705a" stroke-width="1.1"/>
<rect x="473.79" y="374.07" width="5.42" height="9.35" fill="#86c4a0" stroke="#44705a" stroke-width="1.1"/>
<rect x="473.79" y="364.73" width="5.42" height="9.35" fill="#86c4a0" stroke="#44705a" stroke-width="1.1"/>
<rect x="473.79" y="355.38" width="5.42" height="9.35" fill="#86c4a0" stroke="#44705a" stroke-width="1.1"/>
<rect x="473.79" y="346.03" width="5.42" height="9.35" fill="#86c4a0" stroke="#44705a" stroke-width="1.1"/>
<rect x="473.79" y="336.69" width="5.42" height="9.35" fill="#86c4a0" stroke="#44705a" stroke-width="1.1"/>
<rect x="473.79" y="327.34" width="5.42" height="9.35" fill="#86c4a0" stroke="#44705a" stroke-width="1.1"/>
<rect x="473.79" y="317.99" width="5.42" height="9.35" fill="#86c4a0" stroke="#44705a" stroke-width="1.1"/>
<rect x="473.79" y="308.65" width="5.42" height="9.35" fill="#86c4a0" stroke="#44705a" stroke-width="1.1"/>
<rect x="473.79" y="299.30" width="5.42" height="9.35" fill="#86c4a0" stroke="#44705a" stroke-width="1.1"/>
<rect x="473.79" y="289.95" width="5.42" height="9.35" fill="#86c4a0" stroke="#44705a" stroke-width="1.1"/>
<rect x="473.79" y="280.61" width="5.42" height="9.35" fill="#86c4a0" stroke="#44705a" stroke-width="1.1"/>
<rect x="473.79" y="271.26" width="5.42" height="9.35" fill="#86c4a0" stroke="#44705a" stroke-width="1.1"/>
<rect x="473.79" y="261.91" width="5.42" height="9.35" fill="#86c4a0" stroke="#44705a" stroke-width="1.1"/>
<rect x="488.17" y="420.81" width="5.42" height="9.35" fill="#86c4a0" stroke="#44705a" stroke-width="1.1"/>
<rect x="488.17" y="411.46" width="5.42" height="9.35" fill="#86c4a0" stroke="#44705a" stroke-width="1.1"/>
<rect x="488.17" y="402.11" width="5.42" height="9.35" fill="#86c4a0" stroke="#44705a" stroke-width="1.1"/>
<rect x="488.17" y="392.77" width="5.42" height="9.35" fill="#86c4a0" stroke="#44705a" stroke-width="1.1"/>
<rect x="488.17" y="383.42" width="5.42" height="9.35" fill="#86c4a0" stroke="#44705a" stroke-width="1.1"/>
<rect x="488.17" y="374.07" width="5.42" height="9.35" fill="#86c4a0" stroke="#44705a" stroke-width="1.1"/>
<rect x="488.17" y="364.73" width="5.42" height="9.35" fill="#86c4a0" stroke="#44705a" stroke-width="1.1"/>
<rect x="488.17" y="355.38" width="5.42" height="9.35" fill="#86c4a0" stroke="#44705a" stroke-width="1.1"/>
<rect x="488.17" y="346.03" width="5.42" height="9.35" fill="#86c4a0" stroke="#44705a" stroke-width="1.1"/>
<rect x="488.17" y="336.69" width="5.42" height="9.35" fill="#86c4a0" stroke="#44705a" stroke-width="1.1"/>
<rect x="488.17" y="327.34" width="5.42" height="9.35" fill="#86c4a0" stroke="#44705a" stroke-width="1.1"/>
<rect x="488.17" y="317.99" width="5.42" height="9.35" fill="#86c4a0" stroke="#44705a" stroke-width="1.1"/>
<rect x="488.17" y="308.65" width="5.42" height="9.35" fill="#86c4a0" stroke="#44705a" stroke-width="1.1"/>
<rect x="488.17" y="299.30" width="5.42" height="9.35" fill="#86c4a0" stroke="#44705a" stroke-width="1.1"/>
<rect x="488.17" y="289.95" width="5.42" height="9.35" fill="#86c4a0" stroke="#44705a" stroke-width="1.1"/>
<rect x="488.17" y="280.61" width="5.42" height="9.35" fill="#86c4a0" stroke="#44705a" stroke-width="1.1"/>
<rect x="488.17" y="271.26" width="5.42" height="9.35" fill="#86c4a0" stroke="#44705a" stroke-width="1.1"/>
<rect x="488.17" y="261.91" width="5.42" height="9.35" fill="#86c4a0" stroke="#44705a" stroke-width="1.1"/>
<rect x="493.59" y="420.81" width="5.42" height="9.35" fill="#86c4a0" stroke="#44705a" stroke-width="1.1"/>
<rect x="493.59" y="411.46" width="5.42" height="9.35" fill="#86c4a0" stroke="#44705a" stroke-width="1.1"/>
<rect x="493.59" y="402.11" width="5.42" height="9.35" fill="#86c4a0" stroke="#44705a" stroke-width="1.1"/>
<rect x="493.59" y="392.77" width="5.42" height="9.35" fill="#86c4a0" stroke="#44705a" stroke-width="1.1"/>
<rect x="493.59" y="383.42" width="5.42" height="9.35" fill="#86c4a0" stroke="#44705a" stroke-width="1.1"/>
<rect x="493.59" y="374.07" width="5.42" height="9.35" fill="#86c4a0" stroke="#44705a" stroke-width="1.1"/>
<rect x="493.59" y="364.73" width="5.42" height="9.35" fill="#86c4a0" stroke="#44705a" stroke-width="1.1"/>
<rect x="493.59" y="355.38" width="5.42" height="9.35" fill="#86c4a0" stroke="#44705a" stroke-width="1.1"/>
<rect x="493.59" y="346.03" width="5.42" height="9.35" fill="#86c4a0" stroke="#44705a" stroke-width="1.1"/>
<rect x="493.59" y="336.69" width="5.42" height="9.35" fill="#86c4a0" stroke="#44705a" stroke-width="1.1"/>
<rect x="493.59" y="327.34" width="5.42" height="9.35" fill="#86c4a0" stroke="#44705a" stroke-width="1.1"/>
<rect x="493.59" y="317.99" width="5.42" height="9.35" fill="#86c4a0" stroke="#44705a" stroke-width="1.1"/>
<rect x="493.59" y="308.65" width="5.42" height="9.35" fill="#86c4a0" stroke="#44705a" stroke-width="1.1"/>
<rect x="493.59" y="299.30" width="5.42" height="9.35" fill="#86c4a0" stroke="#44705a" stroke-width="1.1"/>
<rect x="493.59" y="289.95" width="5.42" height="9.35" fill="#86c4a0" stroke="#44705a" stroke-width="1.1"/>
<rect x="493.59" y="280.61" width="5.42" height="9.35" fill="#86c4a0" stroke="#44705a" stroke-width="1.1"/>
<rect x="493.59" y="271.26" width="5.42" height="9.35" fill="#86c4a0" stroke="#44705a" stroke-width="1.1"/>
<rect x="493.59" y="261.91" width="5.42" height="9.35" fill="#86c4a0" stroke="#44705a" stroke-width="1.1"/>
<rect x="507.97" y="401.99" width="5.42" height="9.34" fill="#86c4a0" stroke="#44705a" stroke-width="1.1"/>
<rect x="507.97" y="392.65" width="5.42" height="9.34" fill="#86c4a0" stroke="#44705a" stroke-width="1.1"/>
<rect x="507.97" y="383.31" width="5.42" height="9.34" fill="#86c4a0" stroke="#44705a" stroke-width="1.1"/>
<rect x="507.97" y="373.97" width="5.42" height="9.34" fill="#86c4a0" stroke="#44705a" stroke-width="1.1"/>
<rect x="507.97" y="364.64" width="5.42" height="9.34" fill="#86c4a0" stroke="#44705a" stroke-width="1.1"/>
<rect x="507.97" y="355.30" width="5.42" height="9.34" fill="#86c4a0" stroke="#44705a" stroke-width="1.1"/>
<rect x="507.97" y="345.96" width="5.42" height="9.34" fill="#86c4a0" stroke="#44705a" stroke-width="1.1"/>
<rect x="507.97" y="336.62" width="5.42" height="9.34" fill="#86c4a0" stroke="#44705a" stroke-width="1.1"/>
<rect x="507.97" y="327.28" width="5.42" height="9.34" fill="#86c4a0" stroke="#44705a" stroke-width="1.1"/>
<rect x="507.97" y="317.94" width="5.42" height="9.34" fill="#86c4a0" stroke="#44705a" stroke-width="1.1"/>
<rect x="507.97" y="308.60" width="5.42" height="9.34" fill="#86c4a0" stroke="#44705a" stroke-width="1.1"/>
<rect x="507.97" y="299.27" width="5.42" height="9.34" fill="#86c4a0" stroke="#44705a" stroke-width="1.1"/>
<rect x="507.97" y="289.93" width="5.42" height="9.34" fill="#86c4a0" stroke="#44705a" stroke-width="1.1"/>
<rect x="507.97" y="280.59" width="5.42" height="9.34" fill="#86c4a0" stroke="#44705a" stroke-width="1.1"/>
<rect x="507.97" y="271.25" width="5.42" height="9.34" fill="#86c4a0" stroke="#44705a" stroke-width="1.1"/>
<rect x="507.97" y="261.91" width="5.42" height="9.34" fill="#86c4a0" stroke="#44705a" stroke-width="1.1"/>
<rect x="513.39" y="401.99" width="5.42" height="9.34" fill="#86c4a0" stroke="#44705a" stroke-width="1.1"/>
<rect x="513.39" y="392.65" width="5.42" height="9.34" fill="#86c4a0" stroke="#44705a" stroke-width="1.1"/>
<rect x="513.39" y="383.31" width="5.42" height="9.34" fill="#86c4a0" stroke="#44705a" stroke-width="1.1"/>
<rect x="513.39" y="373.97" width="5.42" height="9.34" fill="#86c4a0" stroke="#44705a" stroke-width="1.1"/>
<rect x="513.39" y="364.64" width="5.42" height="9.34" fill="#86c4a0" stroke="#44705a" stroke-width="1.1"/>
<rect x="513.39" y="355.30" width="5.42" height="9.34" fill="#86c4a0" stroke="#44705a" stroke-width="1.1"/>
<rect x="513.39" y="345.96" width="5.42" height="9.34" fill="#86c4a0" stroke="#44705a" stroke-width="1.1"/>
<rect x="513.39" y="336.62" width="5.42" height="9.34" fill="#86c4a0" stroke="#44705a" stroke-width="1.1"/>
<rect x="513.39" y="327.28" width="5.42" height="9.34" fill="#86c4a0" stroke="#44705a" stroke-width="1.1"/>
<rect x="513.39" y="317.94" width="5.42" height="9.34" fill="#86c4a0" stroke="#44705a" stroke-width="1.1"/>
<rect x="513.39" y="308.60" width="5.42" height="9.34" fill="#86c4a0" stroke="#44705a" stroke-width="1.1"/>
<rect x="513.39" y="299.27" width="5.42" height="9.34" fill="#86c4a0" stroke="#44705a" stroke-width="1.1"/>
<rect x="513.39" y="289.93" width="5.42" height="9.34" fill="#86c4a0" stroke="#44705a" stroke-width="1.1"/>
<rect x="513.39" y="280.59" width="5.42" height="9.34" fill="#86c4a0" stroke="#44705a" stroke-width="1.1"/>
<rect x="513.39" y="271.25" width="5.42" height="9.34" fill="#86c4a0" stroke="#44705a" stroke-width="1.1"/>
<rect x="513.39" y="261.91" width="5.42" height="9.34" fill="#86c4a0" stroke="#44705a" stroke-width="1.1"/>
<rect x="527.77" y="392.58" width="5.42" height="9.33" fill="#86c4a0" stroke="#44705a" stroke-width="1.1"/>
<rect x="527.77" y="383.25" width="5.42" height="9.33" fill="#86c4a0" stroke="#44705a" stroke-width="1.1"/>
<rect x="527.77" y="373.92" width="5.42" height="9.33" fill="#86c4a0" stroke="#44705a" stroke-width="1.1"/>
<rect x="527.77" y="364.58" width="5.42" height="9.33" fill="#86c4a0" stroke="#44705a" stroke-width="1.1"/>
<rect x="527.77" y="355.25" width="5.42" height="9.33" fill="#86c4a0" stroke="#44705a" stroke-width="1.1"/>
<rect x="527.77" y="345.91" width="5.42" height="9.33" fill="#86c4a0" stroke="#44705a" stroke-width="1.1"/>
<rect x="527.77" y="336.58" width="5.42" height="9.33" fill="#86c4a0" stroke="#44705a" stroke-width="1.1"/>
<rect x="527.77" y="327.25" width="5.42" height="9.33" fill="#86c4a0" stroke="#44705a" stroke-width="1.1"/>
<rect x="527.77" y="317.91" width="5.42" height="9.33" fill="#86c4a0" stroke="#44705a" stroke-width="1.1"/>
<rect x="527.77" y="308.58" width="5.42" height="9.33" fill="#86c4a0" stroke="#44705a" stroke-width="1.1"/>
<rect x="527.77" y="299.25" width="5.42" height="9.33" fill="#86c4a0" stroke="#44705a" stroke-width="1.1"/>
<rect x="527.77" y="289.91" width="5.42" height="9.33" fill="#86c4a0" stroke="#44705a" stroke-width="1.1"/>
<rect x="527.77" y="280.58" width="5.42" height="9.33" fill="#86c4a0" stroke="#44705a" stroke-width="1.1"/>
<rect x="527.77" y="271.25" width="5.42" height="9.33" fill="#86c4a0" stroke="#44705a" stroke-width="1.1"/>
<rect x="527.77" y="261.91" width="5.42" height="9.33" fill="#86c4a0" stroke="#44705a" stroke-width="1.1"/>
<rect x="533.19" y="392.58" width="5.42" height="9.33" fill="#86c4a0" stroke="#44705a" stroke-width="1.1"/>
<rect x="533.19" y="383.25" width="5.42" height="9.33" fill="#86c4a0" stroke="#44705a" stroke-width="1.1"/>
<rect x="533.19" y="373.92" width="5.42" height="9.33" fill="#86c4a0" stroke="#44705a" stroke-width="1.1"/>
<rect x="533.19" y="364.58" width="5.42" height="9.33" fill="#86c4a0" stroke="#44705a" stroke-width="1.1"/>
<rect x="533.19" y="355.25" width="5.42" height="9.33" fill="#86c4a0" stroke="#44705a" stroke-width="1.1"/>
<rect x="533.19" y="345.91" width="5.42" height="9.33" fill="#86c4a0" stroke="#44705a" stroke-width="1.1"/>
<rect x="533.19" y="336.58" width="5.42" height="9.33" fill="#86c4a0" stroke="#44705a" stroke-width="1.1"/>
<rect x="533.19" y="327.25" width="5.42" height="9.33" fill="#86c4a0" stroke="#44705a" stroke-width="1.1"/>
<rect x="533.19" y="317.91" width="5.42" height="9.33" fill="#86c4a0" stroke="#44705a" stroke-width="1.1"/>
<rect x="533.19" y="308.58" width="5.42" height="9.33" fill="#86c4a0" stroke="#44705a" stroke-width="1.1"/>
<rect x="533.19" y="299.25" width="5.42" height="9.33" fill="#86c4a0" stroke="#44705a" stroke-width="1.1"/>
<rect x="533.19" y="289.91" width="5.42" height="9.33" fill="#86c4a0" stroke="#44705a" stroke-width="1.1"/>
<rect x="533.19" y="280.58" width="5.42" height="9.33" fill="#86c4a0" stroke="#44705a" stroke-width="1.1"/>
<rect x="533.19" y="271.25" width="5.42" height="9.33" fill="#86c4a0" stroke="#44705a" stroke-width="1.1"/>
<rect x="533.19" y="261.91" width="5.42" height="9.33" fill="#86c4a0" stroke="#44705a" stroke-width="1.1"/>
<rect x="547.57" y="383.18" width="5.42" height="9.33" fill="#86c4a0" stroke="#44705a" stroke-width="1.1"/>
<rect x="547.57" y="373.85" width="5.42" height="9.33" fill="#86c4a0" stroke="#44705a" stroke-width="1.1"/>
<rect x="547.57" y="364.52" width="5.42" height="9.33" fill="#86c4a0" stroke="#44705a" stroke-width="1.1"/>
<rect x="547.57" y="355.19" width="5.42" height="9.33" fill="#86c4a0" stroke="#44705a" stroke-width="1.1"/>
<rect x="547.57" y="345.86" width="5.42" height="9.33" fill="#86c4a0" stroke="#44705a" stroke-width="1.1"/>
<rect x="547.57" y="336.54" width="5.42" height="9.33" fill="#86c4a0" stroke="#44705a" stroke-width="1.1"/>
<rect x="547.57" y="327.21" width="5.42" height="9.33" fill="#86c4a0" stroke="#44705a" stroke-width="1.1"/>
<rect x="547.57" y="317.88" width="5.42" height="9.33" fill="#86c4a0" stroke="#44705a" stroke-width="1.1"/>
<rect x="547.57" y="308.55" width="5.42" height="9.33" fill="#86c4a0" stroke="#44705a" stroke-width="1.1"/>
<rect x="547.57" y="299.22" width="5.42" height="9.33" fill="#86c4a0" stroke="#44705a" stroke-width="1.1"/>
<rect x="547.57" y="289.90" width="5.42" height="9.33" fill="#86c4a0" stroke="#44705a" stroke-width="1.1"/>
<rect x="547.57" y="280.57" width="5.42" height="9.33" fill="#86c4a0" stroke="#44705a" stroke-width="1.1"/>
<rect x="547.57" y="271.24" width="5.42" height="9.33" fill="#86c4a0" stroke="#44705a" stroke-width="1.1"/>
<rect x="547.57" y="261.91" width="5.42" height="9.33" fill="#86c4a0" stroke="#44705a" stroke-width="1.1"/>
<rect x="552.99" y="383.18" width="5.42" height="9.33" fill="#86c4a0" stroke="#44705a" stroke-width="1.1"/>
<rect x="552.99" y="373.85" width="5.42" height="9.33" fill="#86c4a0" stroke="#44705a" stroke-width="1.1"/>
<rect x="552.99" y="364.52" width="5.42" height="9.33" fill="#86c4a0" stroke="#44705a" stroke-width="1.1"/>
<rect x="552.99" y="355.19" width="5.42" height="9.33" fill="#86c4a0" stroke="#44705a" stroke-width="1.1"/>
<rect x="552.99" y="345.86" width="5.42" height="9.33" fill="#86c4a0" stroke="#44705a" stroke-width="1.1"/>
<rect x="552.99" y="336.54" width="5.42" height="9.33" fill="#86c4a0" stroke="#44705a" stroke-width="1.1"/>
<rect x="552.99" y="327.21" width="5.42" height="9.33" fill="#86c4a0" stroke="#44705a" stroke-width="1.1"/>
<rect x="552.99" y="317.88" width="5.42" height="9.33" fill="#86c4a0" stroke="#44705a" stroke-width="1.1"/>
<rect x="552.99" y="308.55" width="5.42" height="9.33" fill="#86c4a0" stroke="#44705a" stroke-width="1.1"/>
<rect x="552.99" y="299.22" width="5.42" height="9.33" fill="#86c4a0" stroke="#44705a" stroke-width="1.1"/>
<rect x="552.99" y="289.90" width="5.42" height="9.33" fill="#86c4a0" stroke="#44705a" stroke-width="1.1"/>
<rect x="552.99" y="280.57" width="5.42" height="9.33" fill="#86c4a0" stroke="#44705a" stroke-width="1.1"/>
<rect x="552.99" y="271.24" width="5.42" height="9.33" fill="#86c4a0" stroke="#44705a" stroke-width="1.1"/>
<rect x="552.99" y="261.91" width="5.42" height="9.33" fill="#86c4a0" stroke="#44705a" stroke-width="1.1"/>
<rect x="567.37" y="364.37" width="5.42" height="9.31" fill="#86c4a0" stroke="#44705a" stroke-width="1.1"/>
<rect x="567.37" y="355.05" width="5.42" height="9.31" fill="#86c4a0" stroke="#44705a" stroke-width="1.1"/>
<rect x="567.37" y="345.74" width="5.42" height="9.31" fill="#86c4a0" stroke="#44705a" stroke-width="1.1"/>
<rect x="567.37" y="336.42" width="5.42" height="9.31" fill="#86c4a0" stroke="#44705a" stroke-width="1.1"/>
<rect x="567.37" y="327.11" width="5.42" height="9.31" fill="#86c4a0" stroke="#44705a" stroke-width="1.1"/>
<rect x="567.37" y="317.80" width="5.42" height="9.31" fill="#86c4a0" stroke="#44705a" stroke-width="1.1"/>
<rect x="567.37" y="308.48" width="5.42" height="9.31" fill="#86c4a0" stroke="#44705a" stroke-width="1.1"/>
<rect x="567.37" y="299.17" width="5.42" height="9.31" fill="#86c4a0" stroke="#44705a" stroke-width="1.1"/>
<rect x="567.37" y="289.85" width="5.42" height="9.31" fill="#86c4a0" stroke="#44705a" stroke-width="1.1"/>
<rect x="567.37" y="280.54" width="5.42" height="9.31" fill="#86c4a0" stroke="#44705a" stroke-width="1.1"/>
<rect x="567.37" y="271.23" width="5.42" height="9.31" fill="#86c4a0" stroke="#44705a" stroke-width="1.1"/>
<rect x="567.37" y="261.91" width="5.42" height="9.31" fill="#86c4a0" stroke="#44705a" stroke-width="1.1"/>
<rect x="572.79" y="364.37" width="5.42" height="9.31" fill="#86c4a0" stroke="#44705a" stroke-width="1.1"/>
<rect x="572.79" y="355.05" width="5.42" height="9.31" fill="#86c4a0" stroke="#44705a" stroke-width="1.1"/>
<rect x="572.79" y="345.74" width="5.42" height="9.31" fill="#86c4a0" stroke="#44705a" stroke-width="1.1"/>
<rect x="572.79" y="336.42" width="5.42" height="9.31" fill="#86c4a0" stroke="#44705a" stroke-width="1.1"/>
<rect x="572.79" y="327.11" width="5.42" height="9.31" fill="#86c4a0" stroke="#44705a" stroke-width="1.1"/>
<rect x="572.79" y="317.80" width="5.42" height="9.31" fill="#86c4a0" stroke="#44705a" stroke-width="1.1"/>
<rect x="572.79" y="308.48" width="5.42" height="9.31" fill="#86c4a0" stroke="#44705a" stroke-width="1.1"/>
<rect x="572.79" y="299.17" width="5.42" height="9.31" fill="#86c4a0" stroke="#44705a" stroke-width="1.1"/>
<rect x="572.79" y="289.85" width="5.42" height="9.31" fill="#86c4a0" stroke="#44705a" stroke-width="1.1"/>
<rect x="572.79" y="280.54" width="5.42" height="9.31" fill="#86c4a0" stroke="#44705a" stroke-width="1.1"/>
<rect x="572.79" y="271.23" width="5.42" height="9.31" fill="#86c4a0" stroke="#44705a" stroke-width="1.1"/>
<rect x="572.79" y="261.91" width="5.42" height="9.31" fill="#86c4a0" stroke="#44705a" stroke-width="1.1"/>
<rect x="587.17" y="354.96" width="5.42" height="9.31" fill="#86c4a0" stroke="#44705a" stroke-width="1.1"/>
<rect x="587.17" y="345.66" width="5.42" height="9.31" fill="#86c4a0" stroke="#44705a" stroke-width="1.1"/>
<rect x="587.17" y="336.35" width="5.42" height="9.31" fill="#86c4a0" stroke="#44705a" stroke-width="1.1"/>
<rect x="587.17" y="327.05" width="5.42" height="9.31" fill="#86c4a0" stroke="#44705a" stroke-width="1.1"/>
<rect x="587.17" y="317.74" width="5.42" height="9.31" fill="#86c4a0" stroke="#44705a" stroke-width="1.1"/>
<rect x="587.17" y="308.44" width="5.42" height="9.31" fill="#86c4a0" stroke="#44705a" stroke-width="1.1"/>
<rect x="587.17" y="299.13" width="5.42" height="9.31" fill="#86c4a0" stroke="#44705a" stroke-width="1.1"/>
<rect x="587.17" y="289.83" width="5.42" height="9.31" fill="#86c4a0" stroke="#44705a" stroke-width="1.1"/>
<rect x="587.17" y="280.52" width="5.42" height="9.31" fill="#86c4a0" stroke="#44705a" stroke-width="1.1"/>
<rect x="587.17" y="271.22" width="5.42" height="9.31" fill="#86c4a0" stroke="#44705a" stroke-width="1.1"/>
<rect x="587.17" y="261.91" width="5.42" height="9.31" fill="#86c4a0" stroke="#44705a" stroke-width="1.1"/>
<rect x="592.59" y="354.96" width="5.42" height="9.31" fill="#86c4a0" stroke="#44705a" stroke-width="1.1"/>
<rect x="592.59" y="345.66" width="5.42" height="9.31" fill="#86c4a0" stroke="#44705a" stroke-width="1.1"/>
<rect x="592.59" y="336.35" width="5.42" height="9.31" fill="#86c4a0" stroke="#44705a" stroke-width="1.1"/>
<rect x="592.59" y="327.05" width="5.42" height="9.31" fill="#86c4a0" stroke="#44705a" stroke-width="1.1"/>
<rect x="592.59" y="317.74" width="5.42" height="9.31" fill="#86c4a0" stroke="#44705a" stroke-width="1.1"/>
<rect x="592.59" y="308.44" width="5.42" height="9.31" fill="#86c4a0" stroke="#44705a" stroke-width="1.1"/>
<rect x="592.59" y="299.13" width="5.42" height="9.31" fill="#86c4a0" stroke="#44705a" stroke-width="1.1"/>
<rect x="592.59" y="289.83" width="5.42" height="9.31" fill="#86c4a0" stroke="#44705a" stroke-width="1.1"/>
<rect x="592.59" y="280.52" width="5.42" height="9.31" fill="#86c4a0" stroke="#44705a" stroke-width="1.1"/>
<rect x="592.59" y="271.22" width="5.42" height="9.31" fill="#86c4a0" stroke="#44705a" stroke-width="1.1"/>
<rect x="592.59" y="261.91" width="5.42" height="9.31" fill="#86c4a0" stroke="#44705a" stroke-width="1.1"/>
<rect x="606.96" y="345.56" width="5.42" height="9.29" fill="#86c4a0" stroke="#44705a" stroke-width="1.1"/>
<rect x="606.96" y="336.27" width="5.42" height="9.29" fill="#86c4a0" stroke="#44705a" stroke-width="1.1"/>
<rect x="606.96" y="326.97" width="5.42" height="9.29" fill="#86c4a0" stroke="#44705a" stroke-width="1.1"/>
<rect x="606.96" y="317.68" width="5.42" height="9.29" fill="#86c4a0" stroke="#44705a" stroke-width="1.1"/>
<rect x="606.96" y="308.38" width="5.42" height="9.29" fill="#86c4a0" stroke="#44705a" stroke-width="1.1"/>
<rect x="606.96" y="299.09" width="5.42" height="9.29" fill="#86c4a0" stroke="#44705a" stroke-width="1.1"/>
<rect x="606.96" y="289.80" width="5.42" height="9.29" fill="#86c4a0" stroke="#44705a" stroke-width="1.1"/>
<rect x="606.96" y="280.50" width="5.42" height="9.29" fill="#86c4a0" stroke="#44705a" stroke-width="1.1"/>
<rect x="606.96" y="271.21" width="5.42" height="9.29" fill="#86c4a0" stroke="#44705a" stroke-width="1.1"/>
<rect x="606.96" y="261.91" width="5.42" height="9.29" fill="#86c4a0" stroke="#44705a" stroke-width="1.1"/>
<rect x="612.39" y="345.56" width="5.42" height="9.29" fill="#86c4a0" stroke="#44705a" stroke-width="1.1"/>
<rect x="612.39" y="336.27" width="5.42" height="9.29" fill="#86c4a0" stroke="#44705a" stroke-width="1.1"/>
<rect x="612.39" y="326.97" width="5.42" height="9.29" fill="#86c4a0" stroke="#44705a" stroke-width="1.1"/>
<rect x="612.39" y="317.68" width="5.42" height="9.29" fill="#86c4a0" stroke="#44705a" stroke-width="1.1"/>
<rect x="612.39" y="308.38" width="5.42" height="9.29" fill="#86c4a0" stroke="#44705a" stroke-width="1.1"/>
<rect x="612.39" y="299.09" width="5.42" height="9.29" fill="#86c4a0" stroke="#44705a" stroke-width="1.1"/>
<rect x="612.39" y="289.80" width="5.42" height="9.29" fill="#86c4a0" stroke="#44705a" stroke-width="1.1"/>
<rect x="612.39" y="280.50" width="5.42" height="9.29" fill="#86c4a0" stroke="#44705a" stroke-width="1.1"/>
<rect x="612.39" y="271.21" width="5.42" height="9.29" fill="#86c4a0" stroke="#44705a" stroke-width="1.1"/>
<rect x="612.39" y="261.91" width="5.42" height="9.29" fill="#86c4a0" stroke="#44705a" stroke-width="1.1"/>
<rect x="626.76" y="326.77" width="5.42" height="9.26" fill="#86c4a0" stroke="#44705a" stroke-width="1.1"/>
<rect x="626.76" y="317.50" width="5.42" height="9.26" fill="#86c4a0" stroke="#44705a" stroke-width="1.1"/>
<rect x="626.76" y="308.24" width="5.42" height="9.26" fill="#86c4a0" stroke="#44705a" stroke-width="1.1"/>
<rect x="626.76" y="298.97" width="5.42" height="9.26" fill="#86c4a0" stroke="#44705a" stroke-width="1.1"/>
<rect x="626.76" y="289.71" width="5.42" height="9.26" fill="#86c4a0" stroke="#44705a" stroke-width="1.1"/>
<rect x="626.76" y="280.44" width="5.42" height="9.26" fill="#86c4a0" stroke="#44705a" stroke-width="1.1"/>
<rect x="626.76" y="271.18" width="5.42" height="9.26" fill="#86c4a0" stroke="#44705a" stroke-width="1.1"/>
<rect x="626.76" y="261.91" width="5.42" height="9.26" fill="#86c4a0" stroke="#44705a" stroke-width="1.1"/>
<rect x="632.18" y="326.77" width="5.42" height="9.26" fill="#86c4a0" stroke="#44705a" stroke-width="1.1"/>
<rect x="632.18" y="317.50" width="5.42" height="9.26" fill="#86c4a0" stroke="#44705a" stroke-width="1.1"/>
<rect x="632.18" y="308.24" width="5.42" height="9.26" fill="#86c4a0" stroke="#44705a" stroke-width="1.1"/>
<rect x="632.18" y="298.97" width="5.42" height="9.26" fill="#86c4a0" stroke="#44705a" stroke-width="1.1"/>
<rect x="632.18" y="289.71" width="5.42" height="9.26" fill="#86c4a0" stroke="#44705a" stroke-width="1.1"/>
<rect x="632.18" y="280.44" width="5.42" height="9.26" fill="#86c4a0" stroke="#44705a" stroke-width="1.1"/>
<rect x="632.18" y="271.18" width="5.42" height="9.26" fill="#86c4a0" stroke="#44705a" stroke-width="1.1"/>
<rect x="632.18" y="261.91" width="5.42" height="9.26" fill="#86c4a0" stroke="#44705a" stroke-width="1.1"/>
<rect x="646.56" y="317.38" width="5.42" height="9.24" fill="#86c4a0" stroke="#44705a" stroke-width="1.1"/>
<rect x="646.56" y="308.13" width="5.42" height="9.24" fill="#86c4a0" stroke="#44705a" stroke-width="1.1"/>
<rect x="646.56" y="298.89" width="5.42" height="9.24" fill="#86c4a0" stroke="#44705a" stroke-width="1.1"/>
<rect x="646.56" y="289.64" width="5.42" height="9.24" fill="#86c4a0" stroke="#44705a" stroke-width="1.1"/>
<rect x="646.56" y="280.40" width="5.42" height="9.24" fill="#86c4a0" stroke="#44705a" stroke-width="1.1"/>
<rect x="646.56" y="271.16" width="5.42" height="9.24" fill="#86c4a0" stroke="#44705a" stroke-width="1.1"/>
<rect x="646.56" y="261.91" width="5.42" height="9.24" fill="#86c4a0" stroke="#44705a" stroke-width="1.1"/>
<rect x="651.98" y="317.40" width="5.42" height="9.22" fill="#86c4a0" stroke="#44705a" stroke-width="1.1"/>
<rect x="651.98" y="308.19" width="5.42" height="9.22" fill="#86c4a0" stroke="#44705a" stroke-width="1.1"/>
<rect x="651.98" y="298.97" width="5.42" height="9.22" fill="#86c4a0" stroke="#44705a" stroke-width="1.1"/>
<rect x="651.98" y="289.76" width="5.42" height="9.22" fill="#86c4a0" stroke="#44705a" stroke-width="1.1"/>
<rect x="651.98" y="280.54" width="5.42" height="9.22" fill="#86c4a0" stroke="#44705a" stroke-width="1.1"/>
<rect x="651.98" y="271.32" width="5.42" height="9.22" fill="#86c4a0" stroke="#44705a" stroke-width="1.1"/>
<rect x="666.36" y="308.03" width="5.42" height="9.18" fill="#86c4a0" stroke="#44705a" stroke-width="1.1"/>
<rect x="666.36" y="298.85" width="5.42" height="9.18" fill="#86c4a0" stroke="#44705a" stroke-width="1.1"/>
<rect x="666.36" y="289.68" width="5.42" height="9.18" fill="#86c4a0" stroke="#44705a" stroke-width="1.1"/>
<rect x="666.36" y="280.50" width="5.42" height="9.18" fill="#86c4a0" stroke="#44705a" stroke-width="1.1"/>
<rect x="666.36" y="271.32" width="5.42" height="9.18" fill="#86c4a0" stroke="#44705a" stroke-width="1.1"/>
<rect x="671.78" y="308.03" width="5.42" height="9.18" fill="#86c4a0" stroke="#44705a" stroke-width="1.1"/>
<rect x="671.78" y="298.85" width="5.42" height="9.18" fill="#86c4a0" stroke="#44705a" stroke-width="1.1"/>
<rect x="671.78" y="289.68" width="5.42" height="9.18" fill="#86c4a0" stroke="#44705a" stroke-width="1.1"/>
<rect x="671.78" y="280.50" width="5.42" height="9.18" fill="#86c4a0" stroke="#44705a" stroke-width="1.1"/>
<rect x="671.78" y="271.32" width="5.42" height="9.18" fill="#86c4a0" stroke="#44705a" stroke-width="1.1"/>
<rect x="686.16" y="289.36" width="5.42" height="9.02" fill="#86c4a0" stroke="#44705a" stroke-width="1.1"/>
<rect x="686.16" y="280.34" width="5.42" height="9.02" fill="#86c4a0" stroke="#44705a" stroke-width="1.1"/>
<rect x="686.16" y="271.32" width="5.42" height="9.02" fill="#86c4a0" stroke="#44705a" stroke-width="1.1"/>
<rect x="691.58" y="289.36" width="5.42" height="9.02" fill="#86c4a0" stroke="#44705a" stroke-width="1.1"/>
<rect x="691.58" y="280.34" width="5.42" height="9.02" fill="#86c4a0" stroke="#44705a" stroke-width="1.1"/>
<rect x="691.58" y="271.32" width="5.42" height="9.02" fill="#86c4a0" stroke="#44705a" stroke-width="1.1"/>
<rect x="257.66" y="444.27" width="9.43" height="4.71" fill="#86c4a0" stroke="#44705a" stroke-width="1.1"/>
<rect x="267.09" y="444.27" width="9.43" height="4.71" fill="#86c4a0" stroke="#44705a" stroke-width="1.1"/>
<rect x="276.51" y="444.27" width="9.43" height="4.71" fill="#86c4a0" stroke="#44705a" stroke-width="1.1"/>
<rect x="285.94" y="444.27" width="9.43" height="4.71" fill="#86c4a0" stroke="#44705a" stroke-width="1.1"/>
<rect x="295.37" y="444.27" width="9.43" height="4.71" fill="#86c4a0" stroke="#44705a" stroke-width="1.1"/>
<rect x="304.80" y="444.27" width="9.43" height="4.71" fill="#86c4a0" stroke="#44705a" stroke-width="1.1"/>
<rect x="314.23" y="444.27" width="9.43" height="4.71" fill="#86c4a0" stroke="#44705a" stroke-width="1.1"/>
<rect x="323.65" y="444.27" width="9.43" height="4.71" fill="#86c4a0" stroke="#44705a" stroke-width="1.1"/>
<rect x="333.08" y="444.27" width="9.43" height="4.71" fill="#86c4a0" stroke="#44705a" stroke-width="1.1"/>
<rect x="342.51" y="444.27" width="9.43" height="4.71" fill="#86c4a0" stroke="#44705a" stroke-width="1.1"/>
<rect x="351.94" y="444.27" width="9.43" height="4.71" fill="#86c4a0" stroke="#44705a" stroke-width="1.1"/>
<rect x="361.37" y="444.27" width="9.43" height="4.71" fill="#86c4a0" stroke="#44705a" stroke-width="1.1"/>
<rect x="370.79" y="444.27" width="9.43" height="4.71" fill="#86c4a0" stroke="#44705a" stroke-width="1.1"/>
<rect x="380.22" y="444.27" width="9.43" height="4.71" fill="#86c4a0" stroke="#44705a" stroke-width="1.1"/>
<rect x="389.65" y="444.27" width="9.43" height="4.71" fill="#86c4a0" stroke="#44705a" stroke-width="1.1"/>
<rect x="399.08" y="444.27" width="9.43" height="4.71" fill="#86c4a0" stroke="#44705a" stroke-width="1.1"/>
<rect x="408.50" y="444.27" width="9.43" height="4.71" fill="#86c4a0" stroke="#44705a" stroke-width="1.1"/>
<rect x="417.93" y="444.27" width="9.43" height="4.71" fill="#86c4a0" stroke="#44705a" stroke-width="1.1"/>
<rect x="427.36" y="444.27" width="9.43" height="4.71" fill="#86c4a0" stroke="#44705a" stroke-width="1.1"/>
<rect x="436.79" y="444.27" width="9.43" height="4.71" fill="#86c4a0" stroke="#44705a" stroke-width="1.1"/>
<rect x="446.22" y="444.27" width="9.43" height="4.71" fill="#86c4a0" stroke="#44705a" stroke-width="1.1"/>
<rect x="455.65" y="444.27" width="9.43" height="4.71" fill="#86c4a0" stroke="#44705a" stroke-width="1.1"/>
<rect x="465.07" y="444.27" width="9.43" height="4.71" fill="#86c4a0" stroke="#44705a" stroke-width="1.1"/>
<rect x="257.66" y="439.56" width="9.43" height="4.71" fill="#86c4a0" stroke="#44705a" stroke-width="1.1"/>
<rect x="267.09" y="439.56" width="9.43" height="4.71" fill="#86c4a0" stroke="#44705a" stroke-width="1.1"/>
<rect x="276.51" y="439.56" width="9.43" height="4.71" fill="#86c4a0" stroke="#44705a" stroke-width="1.1"/>
<rect x="285.94" y="439.56" width="9.43" height="4.71" fill="#86c4a0" stroke="#44705a" stroke-width="1.1"/>
<rect x="295.37" y="439.56" width="9.43" height="4.71" fill="#86c4a0" stroke="#44705a" stroke-width="1.1"/>
<rect x="304.80" y="439.56" width="9.43" height="4.71" fill="#86c4a0" stroke="#44705a" stroke-width="1.1"/>
<rect x="314.23" y="439.56" width="9.43" height="4.71" fill="#86c4a0" stroke="#44705a" stroke-width="1.1"/>
<rect x="323.65" y="439.56" width="9.43" height="4.71" fill="#86c4a0" stroke="#44705a" stroke-width="1.1"/>
<rect x="333.08" y="439.56" width="9.43" height="4.71" fill="#86c4a0" stroke="#44705a" stroke-width="1.1"/>
<rect x="342.51" y="439.56" width="9.43" height="4.71" fill="#86c4a0" stroke="#44705a" stroke-width="1.1"/>
<rect x="351.94" y="439.56" width="9.43" height="4.71" fill="#86c4a0" stroke="#44705a" stroke-width="1.1"/>
<rect x="361.37" y="439.56" width="9.43" height="4.71" fill="#86c4a0" stroke="#44705a" stroke-width="1.1"/>
<rect x="370.79" y="439.56" width="9.43" height="4.71" fill="#86c4a0" stroke="#44705a" stroke-width="1.1"/>
<rect x="380.22" y="439.56" width="9.43" height="4.71" fill="#86c4a0" stroke="#44705a" stroke-width="1.1"/>
<rect x="389.65" y="439.56" width="9.43" height="4.71" fill="#86c4a0" stroke="#44705a" stroke-width="1.1"/>
<rect x="399.08" y="439.56" width="9.43" height="4.71" fill="#86c4a0" stroke="#44705a" stroke-width="1.1"/>
<rect x="408.50" y="439.56" width="9.43" height="4.71" fill="#86c4a0" stroke="#44705a" stroke-width="1.1"/>
<rect x="417.93" y="439.56" width="9.43" height="4.71" fill="#86c4a0" stroke="#44705a" stroke-width="1.1"/>
<rect x="427.36" y="439.56" width="9.43" height="4.71" fill="#86c4a0" stroke="#44705a" stroke-width="1.1"/>
<rect x="436.79" y="439.56" width="9.43" height="4.71" fill="#86c4a0" stroke="#44705a" stroke-width="1.1"/>
<rect x="446.22" y="439.56" width="9.43" height="4.71" fill="#86c4a0" stroke="#44705a" stroke-width="1.1"/>
<rect x="455.65" y="439.56" width="9.43" height="4.71" fill="#86c4a0" stroke="#44705a" stroke-width="1.1"/>
<rect x="698.42" y="444.27" width="9.43" height="4.71" fill="#86c4a0" stroke="#44705a" stroke-width="1.1"/>
<rect x="688.99" y="444.27" width="9.43" height="4.71" fill="#86c4a0" stroke="#44705a" stroke-width="1.1"/>
<rect x="679.56" y="444.27" width="9.43" height="4.71" fill="#86c4a0" stroke="#44705a" stroke-width="1.1"/>
<rect x="670.13" y="444.27" width="9.43" height="4.71" fill="#86c4a0" stroke="#44705a" stroke-width="1.1"/>
<rect x="660.70" y="444.27" width="9.43" height="4.71" fill="#86c4a0" stroke="#44705a" stroke-width="1.1"/>
<rect x="651.28" y="444.27" width="9.43" height="4.71" fill="#86c4a0" stroke="#44705a" stroke-width="1.1"/>
<rect x="641.85" y="444.27" width="9.43" height="4.71" fill="#86c4a0" stroke="#44705a" stroke-width="1.1"/>
<rect x="632.42" y="444.27" width="9.43" height="4.71" fill="#86c4a0" stroke="#44705a" stroke-width="1.1"/>
<rect x="622.99" y="444.27" width="9.43" height="4.71" fill="#86c4a0" stroke="#44705a" stroke-width="1.1"/>
<rect x="613.56" y="444.27" width="9.43" height="4.71" fill="#86c4a0" stroke="#44705a" stroke-width="1.1"/>
<rect x="604.14" y="444.27" width="9.43" height="4.71" fill="#86c4a0" stroke="#44705a" stroke-width="1.1"/>
<rect x="594.71" y="444.27" width="9.43" height="4.71" fill="#86c4a0" stroke="#44705a" stroke-width="1.1"/>
<rect x="585.28" y="444.27" width="9.43" height="4.71" fill="#86c4a0" stroke="#44705a" stroke-width="1.1"/>
<rect x="575.85" y="444.27" width="9.43" height="4.71" fill="#86c4a0" stroke="#44705a" stroke-width="1.1"/>
<rect x="566.42" y="444.27" width="9.43" height="4.71" fill="#86c4a0" stroke="#44705a" stroke-width="1.1"/>
<rect x="557.00" y="444.27" width="9.43" height="4.71" fill="#86c4a0" stroke="#44705a" stroke-width="1.1"/>
<rect x="547.57" y="444.27" width="9.43" height="4.71" fill="#86c4a0" stroke="#44705a" stroke-width="1.1"/>
<rect x="538.14" y="444.27" width="9.43" height="4.71" fill="#86c4a0" stroke="#44705a" stroke-width="1.1"/>
<rect x="528.71" y="444.27" width="9.43" height="4.71" fill="#86c4a0" stroke="#44705a" stroke-width="1.1"/>
<rect x="519.28" y="444.27" width="9.43" height="4.71" fill="#86c4a0" stroke="#44705a" stroke-width="1.1"/>
<rect x="509.86" y="444.27" width="9.43" height="4.71" fill="#86c4a0" stroke="#44705a" stroke-width="1.1"/>
<rect x="500.43" y="444.27" width="9.43" height="4.71" fill="#86c4a0" stroke="#44705a" stroke-width="1.1"/>
<rect x="698.42" y="439.56" width="9.43" height="4.71" fill="#86c4a0" stroke="#44705a" stroke-width="1.1"/>
<rect x="688.99" y="439.56" width="9.43" height="4.71" fill="#86c4a0" stroke="#44705a" stroke-width="1.1"/>
<rect x="679.56" y="439.56" width="9.43" height="4.71" fill="#86c4a0" stroke="#44705a" stroke-width="1.1"/>
<rect x="670.13" y="439.56" width="9.43" height="4.71" fill="#86c4a0" stroke="#44705a" stroke-width="1.1"/>
<rect x="660.70" y="439.56" width="9.43" height="4.71" fill="#86c4a0" stroke="#44705a" stroke-width="1.1"/>
<rect x="651.28" y="439.56" width="9.43" height="4.71" fill="#86c4a0" stroke="#44705a" stroke-width="1.1"/>
<rect x="641.85" y="439.56" width="9.43" height="4.71" fill="#86c4a0" stroke="#44705a" stroke-width="1.1"/>
<rect x="632.42" y="439.56" width="9.43" height="4.71" fill="#86c4a0" stroke="#44705a" stroke-width="1.1"/>
<rect x="622.99" y="439.56" width="9.43" height="4.71" fill="#86c4a0" stroke="#44705a" stroke-width="1.1"/>
<rect x="613.56" y="439.56" width="9.43" height="4.71" fill="#86c4a0" stroke="#44705a" stroke-width="1.1"/>
<rect x="604.14" y="439.56" width="9.43" height="4.71" fill="#86c4a0" stroke="#44705a" stroke-width="1.1"/>
<rect x="594.71" y="439.56" width="9.43" height="4.71" fill="#86c4a0" stroke="#44705a" stroke-width="1.1"/>
<rect x="585.28" y="439.56" width="9.43" height="4.71" fill="#86c4a0" stroke="#44705a" stroke-width="1.1"/>
<rect x="575.85" y="439.56" width="9.43" height="4.71" fill="#86c4a0" stroke="#44705a" stroke-width="1.1"/>
<rect x="566.42" y="439.56" width="9.43" height="4.71" fill="#86c4a0" stroke="#44705a" stroke-width="1.1"/>
<rect x="557.00" y="439.56" width="9.43" height="4.71" fill="#86c4a0" stroke="#44705a" stroke-width="1.1"/>
<rect x="547.57" y="439.56" width="9.43" height="4.71" fill="#86c4a0" stroke="#44705a" stroke-width="1.1"/>
<rect x="538.14" y="439.56" width="9.43" height="4.71" fill="#86c4a0" stroke="#44705a" stroke-width="1.1"/>
<rect x="528.71" y="439.56" width="9.43" height="4.71" fill="#86c4a0" stroke="#44705a" stroke-width="1.1"/>
<rect x="519.28" y="439.56" width="9.43" height="4.71" fill="#86c4a0" stroke="#44705a" stroke-width="1.1"/>
<rect x="509.86" y="439.56" width="9.43" height="4.71" fill="#86c4a0" stroke="#44705a" stroke-width="1.1"/>
<rect x="500.43" y="439.56" width="9.43" height="4.71" fill="#86c4a0" stroke="#44705a" stroke-width="1.1"/>
<rect x="257.66" y="424.50" width="9.43" height="4.71" fill="#86c4a0" stroke="#44705a" stroke-width="1.1"/>
<rect x="267.09" y="424.50" width="9.43" height="4.71" fill="#86c4a0" stroke="#44705a" stroke-width="1.1"/>
<rect x="276.51" y="424.50" width="9.43" height="4.71" fill="#86c4a0" stroke="#44705a" stroke-width="1.1"/>
<rect x="285.94" y="424.50" width="9.43" height="4.71" fill="#86c4a0" stroke="#44705a" stroke-width="1.1"/>
<rect x="295.37" y="424.50" width="9.43" height="4.71" fill="#86c4a0" stroke="#44705a" stroke-width="1.1"/>
<rect x="304.80" y="424.50" width="9.43" height="4.71" fill="#86c4a0" stroke="#44705a" stroke-width="1.1"/>
<rect x="314.23" y="424.50" width="9.43" height="4.71" fill="#86c4a0" stroke="#44705a" stroke-width="1.1"/>
<rect x="323.65" y="424.50" width="9.43" height="4.71" fill="#86c4a0" stroke="#44705a" stroke-width="1.1"/>
<rect x="333.08" y="424.50" width="9.43" height="4.71" fill="#86c4a0" stroke="#44705a" stroke-width="1.1"/>
<rect x="342.51" y="424.50" width="9.43" height="4.71" fill="#86c4a0" stroke="#44705a" stroke-width="1.1"/>
<rect x="351.94" y="424.50" width="9.43" height="4.71" fill="#86c4a0" stroke="#44705a" stroke-width="1.1"/>
<rect x="361.37" y="424.50" width="9.43" height="4.71" fill="#86c4a0" stroke="#44705a" stroke-width="1.1"/>
<rect x="370.79" y="424.50" width="9.43" height="4.71" fill="#86c4a0" stroke="#44705a" stroke-width="1.1"/>
<rect x="380.22" y="424.50" width="9.43" height="4.71" fill="#86c4a0" stroke="#44705a" stroke-width="1.1"/>
<rect x="389.65" y="424.50" width="9.43" height="4.71" fill="#86c4a0" stroke="#44705a" stroke-width="1.1"/>
<rect x="399.08" y="424.50" width="9.43" height="4.71" fill="#86c4a0" stroke="#44705a" stroke-width="1.1"/>
<rect x="408.50" y="424.50" width="9.43" height="4.71" fill="#86c4a0" stroke="#44705a" stroke-width="1.1"/>
<rect x="417.93" y="424.50" width="9.43" height="4.71" fill="#86c4a0" stroke="#44705a" stroke-width="1.1"/>
<rect x="427.36" y="424.50" width="9.43" height="4.71" fill="#86c4a0" stroke="#44705a" stroke-width="1.1"/>
<rect x="257.66" y="419.80" width="9.43" height="4.71" fill="#86c4a0" stroke="#44705a" stroke-width="1.1"/>
<rect x="267.09" y="419.80" width="9.43" height="4.71" fill="#86c4a0" stroke="#44705a" stroke-width="1.1"/>
<rect x="276.51" y="419.80" width="9.43" height="4.71" fill="#86c4a0" stroke="#44705a" stroke-width="1.1"/>
<rect x="285.94" y="419.80" width="9.43" height="4.71" fill="#86c4a0" stroke="#44705a" stroke-width="1.1"/>
<rect x="295.37" y="419.80" width="9.43" height="4.71" fill="#86c4a0" stroke="#44705a" stroke-width="1.1"/>
<rect x="304.80" y="419.80" width="9.43" height="4.71" fill="#86c4a0" stroke="#44705a" stroke-width="1.1"/>
<rect x="314.23" y="419.80" width="9.43" height="4.71" fill="#86c4a0" stroke="#44705a" stroke-width="1.1"/>
<rect x="323.65" y="419.80" width="9.43" height="4.71" fill="#86c4a0" stroke="#44705a" stroke-width="1.1"/>
<rect x="333.08" y="419.80" width="9.43" height="4.71" fill="#86c4a0" stroke="#44705a" stroke-width="1.1"/>
<rect x="342.51" y="419.80" width="9.43" height="4.71" fill="#86c4a0" stroke="#44705a" stroke-width="1.1"/>
<rect x="351.94" y="419.80" width="9.43" height="4.71" fill="#86c4a0" stroke="#44705a" stroke-width="1.1"/>
<rect x="361.37" y="419.80" width="9.43" height="4.71" fill="#86c4a0" stroke="#44705a" stroke-width="1.1"/>
<rect x="370.79" y="419.80" width="9.43" height="4.71" fill="#86c4a0" stroke="#44705a" stroke-width="1.1"/>
<rect x="380.22" y="419.80" width="9.43" height="4.71" fill="#86c4a0" stroke="#44705a" stroke-width="1.1"/>
<rect x="389.65" y="419.80" width="9.43" height="4.71" fill="#86c4a0" stroke="#44705a" stroke-width="1.1"/>
<rect x="399.08" y="419.80" width="9.43" height="4.71" fill="#86c4a0" stroke="#44705a" stroke-width="1.1"/>
<rect x="408.50" y="419.80" width="9.43" height="4.71" fill="#86c4a0" stroke="#44705a" stroke-width="1.1"/>
<rect x="417.93" y="419.80" width="9.43" height="4.71" fill="#86c4a0" stroke="#44705a" stroke-width="1.1"/>
<rect x="698.42" y="424.50" width="9.43" height="4.71" fill="#86c4a0" stroke="#44705a" stroke-width="1.1"/>
<rect x="688.99" y="424.50" width="9.43" height="4.71" fill="#86c4a0" stroke="#44705a" stroke-width="1.1"/>
<rect x="679.56" y="424.50" width="9.43" height="4.71" fill="#86c4a0" stroke="#44705a" stroke-width="1.1"/>
<rect x="670.13" y="424.50" width="9.43" height="4.71" fill="#86c4a0" stroke="#44705a" stroke-width="1.1"/>
<rect x="660.70" y="424.50" width="9.43" height="4.71" fill="#86c4a0" stroke="#44705a" stroke-width="1.1"/>
<rect x="651.28" y="424.50" width="9.43" height="4.71" fill="#86c4a0" stroke="#44705a" stroke-width="1.1"/>
<rect x="641.85" y="424.50" width="9.43" height="4.71" fill="#86c4a0" stroke="#44705a" stroke-width="1.1"/>
<rect x="632.42" y="424.50" width="9.43" height="4.71" fill="#86c4a0" stroke="#44705a" stroke-width="1.1"/>
<rect x="622.99" y="424.50" width="9.43" height="4.71" fill="#86c4a0" stroke="#44705a" stroke-width="1.1"/>
<rect x="613.56" y="424.50" width="9.43" height="4.71" fill="#86c4a0" stroke="#44705a" stroke-width="1.1"/>
<rect x="604.14" y="424.50" width="9.43" height="4.71" fill="#86c4a0" stroke="#44705a" stroke-width="1.1"/>
<rect x="594.71" y="424.50" width="9.43" height="4.71" fill="#86c4a0" stroke="#44705a" stroke-width="1.1"/>
<rect x="585.28" y="424.50" width="9.43" height="4.71" fill="#86c4a0" stroke="#44705a" stroke-width="1.1"/>
<rect x="575.85" y="424.50" width="9.43" height="4.71" fill="#86c4a0" stroke="#44705a" stroke-width="1.1"/>
<rect x="566.42" y="424.50" width="9.43" height="4.71" fill="#86c4a0" stroke="#44705a" stroke-width="1.1"/>
<rect x="557.00" y="424.50" width="9.43" height="4.71" fill="#86c4a0" stroke="#44705a" stroke-width="1.1"/>
<rect x="547.57" y="424.50" width="9.43" height="4.71" fill="#86c4a0" stroke="#44705a" stroke-width="1.1"/>
<rect x="538.14" y="424.50" width="9.43" height="4.71" fill="#86c4a0" stroke="#44705a" stroke-width="1.1"/>
<rect x="528.71" y="424.50" width="9.43" height="4.71" fill="#86c4a0" stroke="#44705a" stroke-width="1.1"/>
<rect x="698.42" y="419.80" width="9.43" height="4.71" fill="#86c4a0" stroke="#44705a" stroke-width="1.1"/>
<rect x="688.99" y="419.80" width="9.43" height="4.71" fill="#86c4a0" stroke="#44705a" stroke-width="1.1"/>
<rect x="679.56" y="419.80" width="9.43" height="4.71" fill="#86c4a0" stroke="#44705a" stroke-width="1.1"/>
<rect x="670.13" y="419.80" width="9.43" height="4.71" fill="#86c4a0" stroke="#44705a" stroke-width="1.1"/>
<rect x="660.70" y="419.80" width="9.43" height="4.71" fill="#86c4a0" stroke="#44705a" stroke-width="1.1"/>
<rect x="651.28" y="419.80" width="9.43" height="4.71" fill="#86c4a0" stroke="#44705a" stroke-width="1.1"/>
<rect x="641.85" y="419.80" width="9.43" height="4.71" fill="#86c4a0" stroke="#44705a" stroke-width="1.1"/>
<rect x="632.42" y="419.80" width="9.43" height="4.71" fill="#86c4a0" stroke="#44705a" stroke-width="1.1"/>
<rect x="622.99" y="419.80" width="9.43" height="4.71" fill="#86c4a0" stroke="#44705a" stroke-width="1.1"/>
<rect x="613.56" y="419.80" width="9.43" height="4.71" fill="#86c4a0" stroke="#44705a" stroke-width="1.1"/>
<rect x="604.14" y="419.80" width="9.43" height="4.71" fill="#86c4a0" stroke="#44705a" stroke-width="1.1"/>
<rect x="594.71" y="419.80" width="9.43" height="4.71" fill="#86c4a0" stroke="#44705a" stroke-width="1.1"/>
<rect x="585.28" y="419.80" width="9.43" height="4.71" fill="#86c4a0" stroke="#44705a" stroke-width="1.1"/>
<rect x="575.85" y="419.80" width="9.43" height="4.71" fill="#86c4a0" stroke="#44705a" stroke-width="1.1"/>
<rect x="566.42" y="419.80" width="9.43" height="4.71" fill="#86c4a0" stroke="#44705a" stroke-width="1.1"/>
<rect x="557.00" y="419.80" width="9.43" height="4.71" fill="#86c4a0" stroke="#44705a" stroke-width="1.1"/>
<rect x="547.57" y="419.80" width="9.43" height="4.71" fill="#86c4a0" stroke="#44705a" stroke-width="1.1"/>
<rect x="538.14" y="419.80" width="9.43" height="4.71" fill="#86c4a0" stroke="#44705a" stroke-width="1.1"/>
<rect x="257.66" y="404.74" width="9.43" height="4.71" fill="#86c4a0" stroke="#44705a" stroke-width="1.1"/>
<rect x="267.09" y="404.74" width="9.43" height="4.71" fill="#86c4a0" stroke="#44705a" stroke-width="1.1"/>
<rect x="276.51" y="404.74" width="9.43" height="4.71" fill="#86c4a0" stroke="#44705a" stroke-width="1.1"/>
<rect x="285.94" y="404.74" width="9.43" height="4.71" fill="#86c4a0" stroke="#44705a" stroke-width="1.1"/>
<rect x="295.37" y="404.74" width="9.43" height="4.71" fill="#86c4a0" stroke="#44705a" stroke-width="1.1"/>
<rect x="304.80" y="404.74" width="9.43" height="4.71" fill="#86c4a0" stroke="#44705a" stroke-width="1.1"/>
<rect x="314.23" y="404.74" width="9.43" height="4.71" fill="#86c4a0" stroke="#44705a" stroke-width="1.1"/>
<rect x="323.65" y="404.74" width="9.43" height="4.71" fill="#86c4a0" stroke="#44705a" stroke-width="1.1"/>
<rect x="333.08" y="404.74" width="9.43" height="4.71" fill="#86c4a0" stroke="#44705a" stroke-width="1.1"/>
<rect x="342.51" y="404.74" width="9.43" height="4.71" fill="#86c4a0" stroke="#44705a" stroke-width="1.1"/>
<rect x="351.94" y="404.74" width="9.43" height="4.71" fill="#86c4a0" stroke="#44705a" stroke-width="1.1"/>
<rect x="361.37" y="404.74" width="9.43" height="4.71" fill="#86c4a0" stroke="#44705a" stroke-width="1.1"/>
<rect x="370.79" y="404.74" width="9.43" height="4.71" fill="#86c4a0" stroke="#44705a" stroke-width="1.1"/>
<rect x="380.22" y="404.74" width="9.43" height="4.71" fill="#86c4a0" stroke="#44705a" stroke-width="1.1"/>
<rect x="389.65" y="404.74" width="9.43" height="4.71" fill="#86c4a0" stroke="#44705a" stroke-width="1.1"/>
<rect x="399.08" y="404.74" width="9.43" height="4.71" fill="#86c4a0" stroke="#44705a" stroke-width="1.1"/>
<rect x="257.66" y="400.03" width="9.43" height="4.71" fill="#86c4a0" stroke="#44705a" stroke-width="1.1"/>
<rect x="267.09" y="400.03" width="9.43" height="4.71" fill="#86c4a0" stroke="#44705a" stroke-width="1.1"/>
<rect x="276.51" y="400.03" width="9.43" height="4.71" fill="#86c4a0" stroke="#44705a" stroke-width="1.1"/>
<rect x="285.94" y="400.03" width="9.43" height="4.71" fill="#86c4a0" stroke="#44705a" stroke-width="1.1"/>
<rect x="295.37" y="400.03" width="9.43" height="4.71" fill="#86c4a0" stroke="#44705a" stroke-width="1.1"/>
<rect x="304.80" y="400.03" width="9.43" height="4.71" fill="#86c4a0" stroke="#44705a" stroke-width="1.1"/>
<rect x="314.23" y="400.03" width="9.43" height="4.71" fill="#86c4a0" stroke="#44705a" stroke-width="1.1"/>
<rect x="323.65" y="400.03" width="9.43" height="4.71" fill="#86c4a0" stroke="#44705a" stroke-width="1.1"/>
<rect x="333.08" y="400.03" width="9.43" height="4.71" fill="#86c4a0" stroke="#44705a" stroke-width="1.1"/>
<rect x="342.51" y="400.03" width="9.43" height="4.71" fill="#86c4a0" stroke="#44705a" stroke-width="1.1"/>
<rect x="351.94" y="400.03" width="9.43" height="4.71" fill="#86c4a0" stroke="#44705a" stroke-width="1.1"/>
<rect x="361.37" y="400.03" width="9.43" height="4.71" fill="#86c4a0" stroke="#44705a" stroke-width="1.1"/>
<rect x="370.79" y="400.03" width="9.43" height="4.71" fill="#86c4a0" stroke="#44705a" stroke-width="1.1"/>
<rect x="380.22" y="400.03" width="9.43" height="4.71" fill="#86c4a0" stroke="#44705a" stroke-width="1.1"/>
<rect x="389.65" y="400.03" width="9.43" height="4.71" fill="#86c4a0" stroke="#44705a" stroke-width="1.1"/>
<rect x="698.42" y="404.74" width="9.43" height="4.71" fill="#86c4a0" stroke="#44705a" stroke-width="1.1"/>
<rect x="688.99" y="404.74" width="9.43" height="4.71" fill="#86c4a0" stroke="#44705a" stroke-width="1.1"/>
<rect x="679.56" y="404.74" width="9.43" height="4.71" fill="#86c4a0" stroke="#44705a" stroke-width="1.1"/>
<rect x="670.13" y="404.74" width="9.43" height="4.71" fill="#86c4a0" stroke="#44705a" stroke-width="1.1"/>
<rect x="660.70" y="404.74" width="9.43" height="4.71" fill="#86c4a0" stroke="#44705a" stroke-width="1.1"/>
<rect x="651.28" y="404.74" width="9.43" height="4.71" fill="#86c4a0" stroke="#44705a" stroke-width="1.1"/>
<rect x="641.85" y="404.74" width="9.43" height="4.71" fill="#86c4a0" stroke="#44705a" stroke-width="1.1"/>
<rect x="632.42" y="404.74" width="9.43" height="4.71" fill="#86c4a0" stroke="#44705a" stroke-width="1.1"/>
<rect x="622.99" y="404.74" width="9.43" height="4.71" fill="#86c4a0" stroke="#44705a" stroke-width="1.1"/>
<rect x="613.56" y="404.74" width="9.43" height="4.71" fill="#86c4a0" stroke="#44705a" stroke-width="1.1"/>
<rect x="604.14" y="404.74" width="9.43" height="4.71" fill="#86c4a0" stroke="#44705a" stroke-width="1.1"/>
<rect x="594.71" y="404.74" width="9.43" height="4.71" fill="#86c4a0" stroke="#44705a" stroke-width="1.1"/>
<rect x="585.28" y="404.74" width="9.43" height="4.71" fill="#86c4a0" stroke="#44705a" stroke-width="1.1"/>
<rect x="575.85" y="404.74" width="9.43" height="4.71" fill="#86c4a0" stroke="#44705a" stroke-width="1.1"/>
<rect x="566.42" y="404.74" width="9.43" height="4.71" fill="#86c4a0" stroke="#44705a" stroke-width="1.1"/>
<rect x="557.00" y="404.74" width="9.43" height="4.71" fill="#86c4a0" stroke="#44705a" stroke-width="1.1"/>
<rect x="698.42" y="400.03" width="9.43" height="4.71" fill="#86c4a0" stroke="#44705a" stroke-width="1.1"/>
<rect x="688.99" y="400.03" width="9.43" height="4.71" fill="#86c4a0" stroke="#44705a" stroke-width="1.1"/>
<rect x="679.56" y="400.03" width="9.43" height="4.71" fill="#86c4a0" stroke="#44705a" stroke-width="1.1"/>
<rect x="670.13" y="400.03" width="9.43" height="4.71" fill="#86c4a0" stroke="#44705a" stroke-width="1.1"/>
<rect x="660.70" y="400.03" width="9.43" height="4.71" fill="#86c4a0" stroke="#44705a" stroke-width="1.1"/>
<rect x="651.28" y="400.03" width="9.43" height="4.71" fill="#86c4a0" stroke="#44705a" stroke-width="1.1"/>
<rect x="641.85" y="400.03" width="9.43" height="4.71" fill="#86c4a0" stroke="#44705a" stroke-width="1.1"/>
<rect x="632.42" y="400.03" width="9.43" height="4.71" fill="#86c4a0" stroke="#44705a" stroke-width="1.1"/>
<rect x="622.99" y="400.03" width="9.43" height="4.71" fill="#86c4a0" stroke="#44705a" stroke-width="1.1"/>
<rect x="613.56" y="400.03" width="9.43" height="4.71" fill="#86c4a0" stroke="#44705a" stroke-width="1.1"/>
<rect x="604.14" y="400.03" width="9.43" height="4.71" fill="#86c4a0" stroke="#44705a" stroke-width="1.1"/>
<rect x="594.71" y="400.03" width="9.43" height="4.71" fill="#86c4a0" stroke="#44705a" stroke-width="1.1"/>
<rect x="585.28" y="400.03" width="9.43" height="4.71" fill="#86c4a0" stroke="#44705a" stroke-width="1.1"/>
<rect x="575.85" y="400.03" width="9.43" height="4.71" fill="#86c4a0" stroke="#44705a" stroke-width="1.1"/>
<rect x="566.42" y="400.03" width="9.43" height="4.71" fill="#86c4a0" stroke="#44705a" stroke-width="1.1"/>
<rect x="257.66" y="384.97" width="9.43" height="4.71" fill="#86c4a0" stroke="#44705a" stroke-width="1.1"/>
<rect x="267.09" y="384.97" width="9.43" height="4.71" fill="#86c4a0" stroke="#44705a" stroke-width="1.1"/>
<rect x="276.51" y="384.97" width="9.43" height="4.71" fill="#86c4a0" stroke="#44705a" stroke-width="1.1"/>
<rect x="285.94" y="384.97" width="9.43" height="4.71" fill="#86c4a0" stroke="#44705a" stroke-width="1.1"/>
<rect x="295.37" y="384.97" width="9.43" height="4.71" fill="#86c4a0" stroke="#44705a" stroke-width="1.1"/>
<rect x="304.80" y="384.97" width="9.43" height="4.71" fill="#86c4a0" stroke="#44705a" stroke-width="1.1"/>
<rect x="314.23" y="384.97" width="9.43" height="4.71" fill="#86c4a0" stroke="#44705a" stroke-width="1.1"/>
<rect x="323.65" y="384.97" width="9.43" height="4.71" fill="#86c4a0" stroke="#44705a" stroke-width="1.1"/>
<rect x="333.08" y="384.97" width="9.43" height="4.71" fill="#86c4a0" stroke="#44705a" stroke-width="1.1"/>
<rect x="342.51" y="384.97" width="9.43" height="4.71" fill="#86c4a0" stroke="#44705a" stroke-width="1.1"/>
<rect x="351.94" y="384.97" width="9.43" height="4.71" fill="#86c4a0" stroke="#44705a" stroke-width="1.1"/>
<rect x="361.37" y="384.97" width="9.43" height="4.71" fill="#86c4a0" stroke="#44705a" stroke-width="1.1"/>
<rect x="370.79" y="384.97" width="9.43" height="4.71" fill="#86c4a0" stroke="#44705a" stroke-width="1.1"/>
<rect x="257.66" y="380.27" width="9.43" height="4.71" fill="#86c4a0" stroke="#44705a" stroke-width="1.1"/>
<rect x="267.09" y="380.27" width="9.43" height="4.71" fill="#86c4a0" stroke="#44705a" stroke-width="1.1"/>
<rect x="276.51" y="380.27" width="9.43" height="4.71" fill="#86c4a0" stroke="#44705a" stroke-width="1.1"/>
<rect x="285.94" y="380.27" width="9.43" height="4.71" fill="#86c4a0" stroke="#44705a" stroke-width="1.1"/>
<rect x="295.37" y="380.27" width="9.43" height="4.71" fill="#86c4a0" stroke="#44705a" stroke-width="1.1"/>
<rect x="304.80" y="380.27" width="9.43" height="4.71" fill="#86c4a0" stroke="#44705a" stroke-width="1.1"/>
<rect x="314.23" y="380.27" width="9.43" height="4.71" fill="#86c4a0" stroke="#44705a" stroke-width="1.1"/>
<rect x="323.65" y="380.27" width="9.43" height="4.71" fill="#86c4a0" stroke="#44705a" stroke-width="1.1"/>
<rect x="333.08" y="380.27" width="9.43" height="4.71" fill="#86c4a0" stroke="#44705a" stroke-width="1.1"/>
<rect x="342.51" y="380.27" width="9.43" height="4.71" fill="#86c4a0" stroke="#44705a" stroke-width="1.1"/>
<rect x="351.94" y="380.27" width="9.43" height="4.71" fill="#86c4a0" stroke="#44705a" stroke-width="1.1"/>
<rect x="361.37" y="380.27" width="9.43" height="4.71" fill="#86c4a0" stroke="#44705a" stroke-width="1.1"/>
<rect x="698.42" y="384.97" width="9.43" height="4.71" fill="#86c4a0" stroke="#44705a" stroke-width="1.1"/>
<rect x="688.99" y="384.97" width="9.43" height="4.71" fill="#86c4a0" stroke="#44705a" stroke-width="1.1"/>
<rect x="679.56" y="384.97" width="9.43" height="4.71" fill="#86c4a0" stroke="#44705a" stroke-width="1.1"/>
<rect x="670.13" y="384.97" width="9.43" height="4.71" fill="#86c4a0" stroke="#44705a" stroke-width="1.1"/>
<rect x="660.70" y="384.97" width="9.43" height="4.71" fill="#86c4a0" stroke="#44705a" stroke-width="1.1"/>
<rect x="651.28" y="384.97" width="9.43" height="4.71" fill="#86c4a0" stroke="#44705a" stroke-width="1.1"/>
<rect x="641.85" y="384.97" width="9.43" height="4.71" fill="#86c4a0" stroke="#44705a" stroke-width="1.1"/>
<rect x="632.42" y="384.97" width="9.43" height="4.71" fill="#86c4a0" stroke="#44705a" stroke-width="1.1"/>
<rect x="622.99" y="384.97" width="9.43" height="4.71" fill="#86c4a0" stroke="#44705a" stroke-width="1.1"/>
<rect x="613.56" y="384.97" width="9.43" height="4.71" fill="#86c4a0" stroke="#44705a" stroke-width="1.1"/>
<rect x="604.14" y="384.97" width="9.43" height="4.71" fill="#86c4a0" stroke="#44705a" stroke-width="1.1"/>
<rect x="594.71" y="384.97" width="9.43" height="4.71" fill="#86c4a0" stroke="#44705a" stroke-width="1.1"/>
<rect x="585.28" y="384.97" width="9.43" height="4.71" fill="#86c4a0" stroke="#44705a" stroke-width="1.1"/>
<rect x="698.42" y="380.27" width="9.43" height="4.71" fill="#86c4a0" stroke="#44705a" stroke-width="1.1"/>
<rect x="688.99" y="380.27" width="9.43" height="4.71" fill="#86c4a0" stroke="#44705a" stroke-width="1.1"/>
<rect x="679.56" y="380.27" width="9.43" height="4.71" fill="#86c4a0" stroke="#44705a" stroke-width="1.1"/>
<rect x="670.13" y="380.27" width="9.43" height="4.71" fill="#86c4a0" stroke="#44705a" stroke-width="1.1"/>
<rect x="660.70" y="380.27" width="9.43" height="4.71" fill="#86c4a0" stroke="#44705a" stroke-width="1.1"/>
<rect x="651.28" y="380.27" width="9.43" height="4.71" fill="#86c4a0" stroke="#44705a" stroke-width="1.1"/>
<rect x="641.85" y="380.27" width="9.43" height="4.71" fill="#86c4a0" stroke="#44705a" stroke-width="1.1"/>
<rect x="632.42" y="380.27" width="9.43" height="4.71" fill="#86c4a0" stroke="#44705a" stroke-width="1.1"/>
<rect x="622.99" y="380.27" width="9.43" height="4.71" fill="#86c4a0" stroke="#44705a" stroke-width="1.1"/>
<rect x="613.56" y="380.27" width="9.43" height="4.71" fill="#86c4a0" stroke="#44705a" stroke-width="1.1"/>
<rect x="604.14" y="380.27" width="9.43" height="4.71" fill="#86c4a0" stroke="#44705a" stroke-width="1.1"/>
<rect x="594.71" y="380.27" width="9.43" height="4.71" fill="#86c4a0" stroke="#44705a" stroke-width="1.1"/>
<rect x="257.66" y="365.21" width="9.43" height="4.71" fill="#86c4a0" stroke="#44705a" stroke-width="1.1"/>
<rect x="267.09" y="365.21" width="9.43" height="4.71" fill="#86c4a0" stroke="#44705a" stroke-width="1.1"/>
<rect x="276.51" y="365.21" width="9.43" height="4.71" fill="#86c4a0" stroke="#44705a" stroke-width="1.1"/>
<rect x="285.94" y="365.21" width="9.43" height="4.71" fill="#86c4a0" stroke="#44705a" stroke-width="1.1"/>
<rect x="295.37" y="365.21" width="9.43" height="4.71" fill="#86c4a0" stroke="#44705a" stroke-width="1.1"/>
<rect x="304.80" y="365.21" width="9.43" height="4.71" fill="#86c4a0" stroke="#44705a" stroke-width="1.1"/>
<rect x="314.23" y="365.21" width="9.43" height="4.71" fill="#86c4a0" stroke="#44705a" stroke-width="1.1"/>
<rect x="323.65" y="365.21" width="9.43" height="4.71" fill="#86c4a0" stroke="#44705a" stroke-width="1.1"/>
<rect x="333.08" y="365.21" width="9.43" height="4.71" fill="#86c4a0" stroke="#44705a" stroke-width="1.1"/>
<rect x="342.51" y="365.21" width="9.43" height="4.71" fill="#86c4a0" stroke="#44705a" stroke-width="1.1"/>
<rect x="257.66" y="360.50" width="9.43" height="4.71" fill="#86c4a0" stroke="#44705a" stroke-width="1.1"/>
<rect x="267.09" y="360.50" width="9.43" height="4.71" fill="#86c4a0" stroke="#44705a" stroke-width="1.1"/>
<rect x="276.51" y="360.50" width="9.43" height="4.71" fill="#86c4a0" stroke="#44705a" stroke-width="1.1"/>
<rect x="285.94" y="360.50" width="9.43" height="4.71" fill="#86c4a0" stroke="#44705a" stroke-width="1.1"/>
<rect x="295.37" y="360.50" width="9.43" height="4.71" fill="#86c4a0" stroke="#44705a" stroke-width="1.1"/>
<rect x="304.80" y="360.50" width="9.43" height="4.71" fill="#86c4a0" stroke="#44705a" stroke-width="1.1"/>
<rect x="314.23" y="360.50" width="9.43" height="4.71" fill="#86c4a0" stroke="#44705a" stroke-width="1.1"/>
<rect x="323.65" y="360.50" width="9.43" height="4.71" fill="#86c4a0" stroke="#44705a" stroke-width="1.1"/>
<rect x="333.08" y="360.50" width="9.43" height="4.71" fill="#86c4a0" stroke="#44705a" stroke-width="1.1"/>
<rect x="698.42" y="365.21" width="9.43" height="4.71" fill="#86c4a0" stroke="#44705a" stroke-width="1.1"/>
<rect x="688.99" y="365.21" width="9.43" height="4.71" fill="#86c4a0" stroke="#44705a" stroke-width="1.1"/>
<rect x="679.56" y="365.21" width="9.43" height="4.71" fill="#86c4a0" stroke="#44705a" stroke-width="1.1"/>
<rect x="670.13" y="365.21" width="9.43" height="4.71" fill="#86c4a0" stroke="#44705a" stroke-width="1.1"/>
<rect x="660.70" y="365.21" width="9.43" height="4.71" fill="#86c4a0" stroke="#44705a" stroke-width="1.1"/>
<rect x="651.28" y="365.21" width="9.43" height="4.71" fill="#86c4a0" stroke="#44705a" stroke-width="1.1"/>
<rect x="641.85" y="365.21" width="9.43" height="4.71" fill="#86c4a0" stroke="#44705a" stroke-width="1.1"/>
<rect x="632.42" y="365.21" width="9.43" height="4.71" fill="#86c4a0" stroke="#44705a" stroke-width="1.1"/>
<rect x="622.99" y="365.21" width="9.43" height="4.71" fill="#86c4a0" stroke="#44705a" stroke-width="1.1"/>
<rect x="698.42" y="360.50" width="9.43" height="4.71" fill="#86c4a0" stroke="#44705a" stroke-width="1.1"/>
<rect x="688.99" y="360.50" width="9.43" height="4.71" fill="#86c4a0" stroke="#44705a" stroke-width="1.1"/>
<rect x="679.56" y="360.50" width="9.43" height="4.71" fill="#86c4a0" stroke="#44705a" stroke-width="1.1"/>
<rect x="670.13" y="360.50" width="9.43" height="4.71" fill="#86c4a0" stroke="#44705a" stroke-width="1.1"/>
<rect x="660.70" y="360.50" width="9.43" height="4.71" fill="#86c4a0" stroke="#44705a" stroke-width="1.1"/>
<rect x="651.28" y="360.50" width="9.43" height="4.71" fill="#86c4a0" stroke="#44705a" stroke-width="1.1"/>
<rect x="641.85" y="360.50" width="9.43" height="4.71" fill="#86c4a0" stroke="#44705a" stroke-width="1.1"/>
<rect x="632.42" y="360.50" width="9.43" height="4.71" fill="#86c4a0" stroke="#44705a" stroke-width="1.1"/>
<rect x="622.99" y="360.50" width="9.43" height="4.71" fill="#86c4a0" stroke="#44705a" stroke-width="1.1"/>
<rect x="257.66" y="345.44" width="9.43" height="4.71" fill="#86c4a0" stroke="#44705a" stroke-width="1.1"/>
<rect x="267.09" y="345.44" width="9.43" height="4.71" fill="#86c4a0" stroke="#44705a" stroke-width="1.1"/>
<rect x="276.51" y="345.44" width="9.43" height="4.71" fill="#86c4a0" stroke="#44705a" stroke-width="1.1"/>
<rect x="285.94" y="345.44" width="9.43" height="4.71" fill="#86c4a0" stroke="#44705a" stroke-width="1.1"/>
<rect x="295.37" y="345.44" width="9.43" height="4.71" fill="#86c4a0" stroke="#44705a" stroke-width="1.1"/>
<rect x="304.80" y="345.44" width="9.43" height="4.71" fill="#86c4a0" stroke="#44705a" stroke-width="1.1"/>
<rect x="257.66" y="340.74" width="9.43" height="4.71" fill="#86c4a0" stroke="#44705a" stroke-width="1.1"/>
<rect x="267.09" y="340.74" width="9.43" height="4.71" fill="#86c4a0" stroke="#44705a" stroke-width="1.1"/>
<rect x="276.51" y="340.74" width="9.43" height="4.71" fill="#86c4a0" stroke="#44705a" stroke-width="1.1"/>
<rect x="285.94" y="340.74" width="9.43" height="4.71" fill="#86c4a0" stroke="#44705a" stroke-width="1.1"/>
<rect x="295.37" y="340.74" width="9.43" height="4.71" fill="#86c4a0" stroke="#44705a" stroke-width="1.1"/>
<rect x="304.80" y="340.74" width="9.43" height="4.71" fill="#86c4a0" stroke="#44705a" stroke-width="1.1"/>
<rect x="698.42" y="345.44" width="9.43" height="4.71" fill="#86c4a0" stroke="#44705a" stroke-width="1.1"/>
<rect x="688.99" y="345.44" width="9.43" height="4.71" fill="#86c4a0" stroke="#44705a" stroke-width="1.1"/>
<rect x="679.56" y="345.44" width="9.43" height="4.71" fill="#86c4a0" stroke="#44705a" stroke-width="1.1"/>
<rect x="670.13" y="345.44" width="9.43" height="4.71" fill="#86c4a0" stroke="#44705a" stroke-width="1.1"/>
<rect x="660.70" y="345.44" width="9.43" height="4.71" fill="#86c4a0" stroke="#44705a" stroke-width="1.1"/>
<rect x="651.28" y="345.44" width="9.43" height="4.71" fill="#86c4a0" stroke="#44705a" stroke-width="1.1"/>
<rect x="698.42" y="340.74" width="9.43" height="4.71" fill="#86c4a0" stroke="#44705a" stroke-width="1.1"/>
<rect x="688.99" y="340.74" width="9.43" height="4.71" fill="#86c4a0" stroke="#44705a" stroke-width="1.1"/>
<rect x="679.56" y="340.74" width="9.43" height="4.71" fill="#86c4a0" stroke="#44705a" stroke-width="1.1"/>
<rect x="670.13" y="340.74" width="9.43" height="4.71" fill="#86c4a0" stroke="#44705a" stroke-width="1.1"/>
<rect x="660.70" y="340.74" width="9.43" height="4.71" fill="#86c4a0" stroke="#44705a" stroke-width="1.1"/>
<rect x="257.66" y="325.68" width="9.43" height="4.71" fill="#86c4a0" stroke="#44705a" stroke-width="1.1"/>
<rect x="267.09" y="325.68" width="9.43" height="4.71" fill="#86c4a0" stroke="#44705a" stroke-width="1.1"/>
<rect x="276.51" y="325.68" width="9.43" height="4.71" fill="#86c4a0" stroke="#44705a" stroke-width="1.1"/>
<rect x="257.66" y="320.97" width="9.43" height="4.71" fill="#86c4a0" stroke="#44705a" stroke-width="1.1"/>
<rect x="267.09" y="320.97" width="9.43" height="4.71" fill="#86c4a0" stroke="#44705a" stroke-width="1.1"/>
<rect x="698.42" y="325.68" width="9.43" height="4.71" fill="#86c4a0" stroke="#44705a" stroke-width="1.1"/>
<rect x="688.99" y="325.68" width="9.43" height="4.71" fill="#86c4a0" stroke="#44705a" stroke-width="1.1"/>
<rect x="679.56" y="325.68" width="9.43" height="4.71" fill="#86c4a0" stroke="#44705a" stroke-width="1.1"/>
<rect x="698.42" y="320.97" width="9.43" height="4.71" fill="#86c4a0" stroke="#44705a" stroke-width="1.1"/>
<rect x="688.99" y="320.97" width="9.43" height="4.71" fill="#86c4a0" stroke="#44705a" stroke-width="1.1"/>
<rect x="255.30" y="237.21" width="457.26" height="230.59" fill="none" stroke="#000" stroke-width="2.5"/>
<polyline points="489.59,465.45 485.34,463.33 485.34,419.33 487.23,416.50 490.06,416.98" fill="none" stroke="#e3342f" stroke-width="1.7" stroke-linejoin="round" stroke-linecap="round"/>
<polyline points="490.06,416.98 484.87,416.50 481.10,420.27 479.69,430.15 475.44,435.00 466.49,435.00 447.16,416.22 406.62,415.09 373.15,415.09 374.09,407.56" fill="none" stroke="#e3342f" stroke-width="1.7" stroke-linejoin="round" stroke-linecap="round"/>
<polyline points="383.05,407.56 382.34,415.09" fill="none" stroke="#e3342f" stroke-width="1.7" stroke-linejoin="round" stroke-linecap="round"/>
<polyline points="406.62,415.09 409.92,411.80 409.92,400.03 376.45,368.50 367.49,368.50 358.07,359.56 351.47,359.56 325.77,336.17 325.77,312.97 316.58,312.97" fill="none" stroke="#e3342f" stroke-width="1.7" stroke-linejoin="round" stroke-linecap="round"/>
<polyline points="349.11,357.68 363.25,372.74 372.21,378.39 400.49,378.39 404.73,374.62 404.73,259.79 408.50,256.03 649.67,256.03 659.76,265.21 673.90,265.21 677.91,270.62 677.91,288.97 682.86,293.68 682.86,297.91 692.29,307.80 692.76,320.50" fill="none" stroke="#e3342f" stroke-width="1.7" stroke-linejoin="round" stroke-linecap="round"/>
<polyline points="396.72,312.97 404.73,312.97" fill="none" stroke="#e3342f" stroke-width="1.7" stroke-linejoin="round" stroke-linecap="round"/>
<polyline points="461.77,256.03 461.77,259.32 461.77,274.85 470.73,275.32" fill="none" stroke="#e3342f" stroke-width="1.7" stroke-linejoin="round" stroke-linecap="round"/>
<polyline points="477.33,256.03 480.63,259.32 480.63,294.15 475.92,294.15" fill="none" stroke="#e3342f" stroke-width="1.7" stroke-linejoin="round" stroke-linecap="round"/>
<polyline points="692.76,319.09 690.87,317.21 688.05,317.21 682.86,319.56 679.56,321.91 662.12,336.03 656.93,336.03 649.86,341.21 649.86,350.29 653.16,354.39 664.00,354.39 664.95,347.80" fill="none" stroke="#e3342f" stroke-width="1.7" stroke-linejoin="round" stroke-linecap="round"/>
<polyline points="489.59,465.45 489.59,445.35 499.01,435.00 513.16,435.00 528.24,420.41 532.48,420.41 536.73,416.22 542.38,416.22 557.47,402.39 569.25,392.50 574.91,391.56 591.41,378.15 596.59,374.15 606.96,373.21 626.29,354.39 653.16,354.39" fill="none" stroke="#e3342f" stroke-width="1.7" stroke-linejoin="round" stroke-linecap="round"/>
<polyline points="532.48,420.41 533.90,426.62" fill="none" stroke="#e3342f" stroke-width="1.7" stroke-linejoin="round" stroke-linecap="round"/>
<rect x="281.94" y="463.80" width="8" height="8" fill="#ff0000"/>
<rect x="300.80" y="463.80" width="8" height="8" fill="#ff0000"/>
<rect x="319.65" y="463.80" width="8" height="8" fill="#ff0000"/>
<rect x="338.51" y="463.80" width="8" height="8" fill="#ff0000"/>
<rect x="357.37" y="463.80" width="8" height="8" fill="#ff0000"/>
<rect x="376.22" y="463.80" width="8" height="8" fill="#ff0000"/>
<rect x="395.08" y="463.80" width="8" height="8" fill="#ff0000"/>
<rect x="413.93" y="463.80" width="8" height="8" fill="#ff0000"/>
<rect x="432.79" y="463.80" width="8" height="8" fill="#ff0000"/>
<rect x="451.65" y="463.80" width="8" height="8" fill="#ff0000"/>
<rect x="470.50" y="463.80" width="8" height="8" fill="#ff0000"/>
<rect x="489.36" y="463.80" width="8" height="8" fill="#ff0000"/>
<rect x="508.21" y="463.80" width="8" height="8" fill="#ff0000"/>
<rect x="527.07" y="463.80" width="8" height="8" fill="#ff0000"/>
<rect x="545.92" y="463.80" width="8" height="8" fill="#ff0000"/>
<rect x="564.78" y="463.80" width="8" height="8" fill="#ff0000"/>
<rect x="583.64" y="463.80" width="8" height="8" fill="#ff0000"/>
<rect x="602.49" y="463.80" width="8" height="8" fill="#ff0000"/>
<rect x="621.35" y="463.80" width="8" height="8" fill="#ff0000"/>
<rect x="640.21" y="463.80" width="8" height="8" fill="#ff0000"/>
<rect x="659.06" y="463.80" width="8" height="8" fill="#ff0000"/>
<rect x="677.92" y="463.80" width="8" height="8" fill="#ff0000"/>
<text x="176.5" y="51.5" font-size="7.5" font-weight="bold" text-anchor="middle" fill="#555">ABC</text>
<polyline points="168.5,58.5 174.5,64.5 183.5,54" fill="none" stroke="#3d78c0" stroke-width="2.8" stroke-linecap="round" stroke-linejoin="round"/>
<rect x="211" y="46.5" width="21" height="17" fill="#f4f4f4" stroke="#c4c4c4" stroke-width="1.2"/>
<line x1="221.5" y1="46.5" x2="221.5" y2="63.5" stroke="#c4c4c4" stroke-width="1.2"/>
<line x1="213.5" y1="50.5" x2="219.5" y2="50.5" stroke="#d6d6d6" stroke-width="0.9"/>
<line x1="223.5" y1="50.5" x2="229.5" y2="50.5" stroke="#d6d6d6" stroke-width="0.9"/>
<line x1="213.5" y1="53.5" x2="219.5" y2="53.5" stroke="#d6d6d6" stroke-width="0.9"/>
<line x1="223.5" y1="53.5" x2="229.5" y2="53.5" stroke="#d6d6d6" stroke-width="0.9"/>
<line x1="213.5" y1="56.5" x2="219.5" y2="56.5" stroke="#d6d6d6" stroke-width="0.9"/>
<line x1="223.5" y1="56.5" x2="229.5" y2="56.5" stroke="#d6d6d6" stroke-width="0.9"/>
<line x1="213.5" y1="59.5" x2="219.5" y2="59.5" stroke="#d6d6d6" stroke-width="0.9"/>
<line x1="223.5" y1="59.5" x2="229.5" y2="59.5" stroke="#d6d6d6" stroke-width="0.9"/>
<circle cx="286" cy="52.8" r="7.6" fill="#fff" stroke="#3d78c0" stroke-width="2"/>
<line x1="280.5" y1="58.5" x2="275.5" y2="64" stroke="#3d78c0" stroke-width="3" stroke-linecap="round"/>
<text x="286" y="56.5" font-size="10" font-weight="bold" text-anchor="middle" fill="#333">i</text>
<text x="336.5" y="57" font-size="15" fill="#444">a</text>
<path d="M346.5,58.5 h8 M350,56.5 l-1,9.5 M353.5,59.5 q-6,1 -6,4.5 q0,2 2.5,1.5 q5,-1.5 6,-4.5 q-1,4 1.5,5.5" fill="none" stroke="#444" stroke-width="1.3" stroke-linecap="round"/>
<path d="M342,47.5 q5,-3.5 9,1.5" fill="none" stroke="#3d78c0" stroke-width="1.4"/>
<circle cx="376" cy="50.5" r="5.5" fill="none" stroke="#777" stroke-width="1"/>
<line x1="370.5" y1="50.5" x2="381.5" y2="50.5" stroke="#777" stroke-width="0.8"/>
<text x="376" y="67" font-size="15" font-weight="bold" text-anchor="middle" fill="#3d78c0">A</text>
<path d="M387.5,47 v1.5 M383,50.5 v-1.5 h9 v1.5 M385,51.5 h5 l-2,1.5 M383.5,54 h8.5 M387.5,53 v5 l-1.2,-0.6" fill="none" stroke="#3d78c0" stroke-width="1.1"/>
<path d="M418,48.5 h19 v13 h-14 l-3,3.5 v-3.5 h-2 z" fill="#fff" stroke="#8a8a8a" stroke-width="1.2"/>
<path d="M417.5,44 v8 M413.5,48 h8" stroke="#3a9a6a" stroke-width="2.2"/>
<path d="M458.5,48.5 h19 v13 h-14 l-3,3.5 v-3.5 h-2 z" fill="#f6f6f6" stroke="#cdcdcd" stroke-width="1.2"/>
<path d="M457,44 l8,8 M465,44 l-8,8" stroke="#bdbdbd" stroke-width="1.4"/>
<path d="M491,48.5 h19 v13 h-14 l-3,3.5 v-3.5 h-2 z" fill="#f6f6f6" stroke="#cdcdcd" stroke-width="1.2"/>
<path d="M500,47 h-9 m3,-3 l-3,3 l3,3" fill="none" stroke="#bdbdbd" stroke-width="1.4"/>
<path d="M520,48.5 h19 v13 h-14 l-3,3.5 v-3.5 h-2 z" fill="#f6f6f6" stroke="#cdcdcd" stroke-width="1.2"/>
<path d="M518,47 h9 m-3,-3 l3,3 l-3,3" fill="none" stroke="#bdbdbd" stroke-width="1.4"/>
<rect x="569.5" y="46.5" width="18.5" height="16.5" fill="#fff" stroke="#8a8a8a" stroke-width="1"/>
<rect x="569.5" y="46.5" width="18.5" height="3" fill="#3b6db3"/>
<rect x="580" y="55" width="6" height="2" fill="#6a9ad0"/>
<line x1="580" y1="52" x2="586" y2="52" stroke="#9ab" stroke-width="0.8"/><line x1="580" y1="59.5" x2="586" y2="59.5" stroke="#9ab" stroke-width="0.8"/>
<rect x="628.5" y="46" width="12.5" height="15.5" fill="#fff" stroke="#7a9cc8" stroke-width="1"/>
<rect x="624.5" y="49.5" width="12.5" height="15.5" fill="#e8f0fa" stroke="#5a86c0" stroke-width="1"/>
<line x1="626.5" y1="53" x2="635" y2="53" stroke="#7fa6d8" stroke-width="0.9"/>
<line x1="626.5" y1="55.5" x2="635" y2="55.5" stroke="#7fa6d8" stroke-width="0.9"/>
<line x1="626.5" y1="58" x2="635" y2="58" stroke="#7fa6d8" stroke-width="0.9"/>
<line x1="626.5" y1="60.5" x2="635" y2="60.5" stroke="#7fa6d8" stroke-width="0.9"/>
<path d="M663.5,46.5 h10 l4,4 v14 h-14 z" fill="#f8f8f8" stroke="#c8c8c8" stroke-width="1"/>
<polyline points="666,56 669.5,60 675,52" fill="none" stroke="#b8b8b8" stroke-width="1.3"/>
<path d="M703,46.5 h10 l4,4 v14 h-14 z" fill="#f8f8f8" stroke="#c8c8c8" stroke-width="1"/>
<path d="M706,52 l8,9 M714,52 l-8,9" stroke="#b8b8b8" stroke-width="1.2"/>
<rect x="737" y="47" width="8" height="8" fill="#f6f6f6" stroke="#c6c6c6" stroke-width="0.9"/>
<rect x="737" y="63" width="8" height="8" fill="#f6f6f6" stroke="#c6c6c6" stroke-width="0.9"/>
<rect x="737" y="79" width="8" height="8" fill="#f6f6f6" stroke="#c6c6c6" stroke-width="0.9"/>
<path d="M735,51 h5 m-2,-2 l2,2 l-2,2" fill="none" stroke="#bbb" stroke-width="0.9"/>
<path d="M735,67 h5 m-2,-2 l2,2 l-2,2" fill="none" stroke="#bbb" stroke-width="0.9"/>
<path d="M839.5,45.5 h10 l4,4 v13 h-14 z" fill="#f6f6f6" stroke="#cfcfcf" stroke-width="1"/>
<path d="M836.5,48.5 h10 l4,4 v13 h-14 z" fill="#f6f6f6" stroke="#c8c8c8" stroke-width="1"/>
<polyline points="839,57 843,62 850,53" fill="none" stroke="#b8b8b8" stroke-width="1.4"/>
<ellipse cx="907" cy="58" rx="7.5" ry="5" fill="none" stroke="#d9513c" stroke-width="2" transform="rotate(-25 907 58)"/>
<line x1="904" y1="61" x2="918" y2="46" stroke="#5a5a5a" stroke-width="3" stroke-linecap="round"/>
<line x1="903" y1="62" x2="905" y2="60" stroke="#d9513c" stroke-width="2"/>
<path d="M345.7,84.5 h3.6 l-1.8,2 z" fill="#555"/>
<path d="M377.7,84.5 h3.6 l-1.8,2 z" fill="#555"/>
<path d="M466.2,84.5 h3.6 l-1.8,2 z" fill="#c0c0c0"/>
<path d="M668.2,84.5 h3.6 l-1.8,2 z" fill="#c0c0c0"/>
<path d="M708.7,84.5 h3.6 l-1.8,2 z" fill="#c0c0c0"/>
<path d="M601.7,83.5 h3.6 l-1.8,2 z" fill="#444"/>
<polyline points="955.5,100.5 958.7,97.5 962,100.5" fill="none" stroke="#555" stroke-width="1.1"/>
<rect x="161.5" y="6.5" width="9" height="9" fill="none" stroke="#fbe7df" stroke-width="1.3"/>
<rect x="163.5" y="6.5" width="5" height="3" fill="none" stroke="#fbe7df" stroke-width="1"/>
<rect x="163.5" y="12" width="5" height="3.5" fill="#fbe7df"/>
<path d="M192,9.5 h5 a3.3,3.3 0 0 1 0,6.6 h-2" fill="none" stroke="#fbe7df" stroke-width="1.4"/>
<path d="M194.5,6.5 l-3,3 l3,3" fill="none" stroke="#fbe7df" stroke-width="1.4"/>
<circle cx="208" cy="11" r="0.9" fill="#fbe7df"/>
<path d="M231.5,8 a4.5,4.5 0 1 1 -4,-1" fill="none" stroke="#fbe7df" stroke-width="1.4"/>
<path d="M228,5 l3,2.5 l-3,2" fill="none" stroke="#fbe7df" stroke-width="1.2"/>
<rect x="254.5" y="6" width="11" height="1.4" fill="#fbe7df"/>
<rect x="255.5" y="7.5" width="9" height="7" fill="none" stroke="#fbe7df" stroke-width="1"/>
<line x1="260" y1="14.5" x2="260" y2="17" stroke="#fbe7df" stroke-width="1"/>
<circle cx="263" cy="12" r="2.6" fill="#c74c2e" stroke="#fbe7df" stroke-width="1"/>
<line x1="290" y1="9" x2="294" y2="9" stroke="#fbe7df" stroke-width="0.9"/>
<path d="M290,11 h4 l-2,2.2 z" fill="#fbe7df"/>
<rect x="852.5" y="8.5" width="9" height="6.5" fill="none" stroke="#e49a84" stroke-width="0.9"/>
<path d="M855,10.5 h4 l-2,2 z" fill="#e49a84"/>
<line x1="885.5" y1="12" x2="892.5" y2="12" stroke="#e49a84" stroke-width="0.9"/>
<rect x="918.5" y="8.5" width="7" height="6.5" fill="none" stroke="#e49a84" stroke-width="0.9"/>
<path d="M950,8.5 l6.5,6.5 M956.5,8.5 l-6.5,6.5" stroke="#e49a84" stroke-width="0.9"/>
<circle cx="725.5" cy="29.5" r="3.2" fill="none" stroke="#e49a84" stroke-width="1"/>
<line x1="724" y1="34.5" x2="727" y2="34.5" stroke="#e49a84" stroke-width="1"/>
<circle cx="891.5" cy="28.5" r="2.8" fill="none" stroke="#fbe7df" stroke-width="1.2"/>
<path d="M886.5,36.5 q5,-8 10,0" fill="none" stroke="#fbe7df" stroke-width="1.2"/>
<rect x="220.5" y="706.5" width="8" height="7" fill="none" stroke="#6a6a6a" stroke-width="0.9"/>
<line x1="224.5" y1="706.5" x2="224.5" y2="713.5" stroke="#6a6a6a" stroke-width="0.9"/>
<line x1="592.5" y1="707" x2="595.5" y2="707" stroke="#6a6a6a" stroke-width="0.9"/>
<line x1="590.5" y1="709.5" x2="597.5" y2="709.5" stroke="#6a6a6a" stroke-width="0.9"/>
<line x1="590.5" y1="712" x2="597.5" y2="712" stroke="#6a6a6a" stroke-width="0.9"/>
<line x1="590.5" y1="714.5" x2="597.5" y2="714.5" stroke="#6a6a6a" stroke-width="0.9"/>
<path d="M645.5,706.5 h9 v6 h-5 l-2,2 v-2 h-2 z" fill="#6a6a6a"/>
<rect x="726.5" y="706.5" width="10" height="9" fill="none" stroke="#6a6a6a" stroke-width="0.9"/>
<rect x="728.5" y="708.5" width="6" height="4" fill="none" stroke="#6a6a6a" stroke-width="0.8"/>
<rect x="749.5" y="706.5" width="4" height="3.5" fill="none" stroke="#6a6a6a" stroke-width="0.8"/>
<rect x="749.5" y="711.5" width="4" height="3.5" fill="none" stroke="#6a6a6a" stroke-width="0.8"/>
<rect x="755.5" y="706.5" width="4" height="3.5" fill="none" stroke="#6a6a6a" stroke-width="0.8"/>
<rect x="755.5" y="711.5" width="4" height="3.5" fill="none" stroke="#6a6a6a" stroke-width="0.8"/>
<path d="M774.5,707 l4,1 l4,-1 v8 l-4,1 l-4,-1 z" fill="none" stroke="#6a6a6a" stroke-width="0.8"/><line x1="778.5" y1="708" x2="778.5" y2="716" stroke="#6a6a6a" stroke-width="0.8"/>
<line x1="799" y1="707" x2="809" y2="707" stroke="#6a6a6a" stroke-width="1.1"/><rect x="800.5" y="708" width="7" height="4.5" fill="none" stroke="#6a6a6a" stroke-width="0.8"/><line x1="804" y1="712.5" x2="804" y2="716" stroke="#6a6a6a" stroke-width="0.8"/>
<line x1="826" y1="711.5" x2="830" y2="711.5" stroke="#6a6a6a" stroke-width="1"/>
<line x1="833" y1="711.5" x2="903" y2="711.5" stroke="#a8a8a8" stroke-width="0.8"/>
<rect x="860" y="707" width="2.5" height="9" fill="#555"/>
<path d="M905.5,711.5 h4 M907.5,709.5 v4" stroke="#6a6a6a" stroke-width="1"/>
<rect x="948.5" y="706.5" width="9" height="9" fill="none" stroke="#6a6a6a" stroke-width="0.8"/>
<path d="M950,708 l2,2 M956,708 l-2,2 M950,714 l2,-2 M956,714 l-2,-2" stroke="#6a6a6a" stroke-width="0.8"/>
<path d="M960.5,113 l3,-3 l3,3 z" fill="#555"/>
<path d="M960.5,657 l3,3 l3,-3 z" fill="#555"/>
<path d="M961,670 l2.5,-2.5 l2.5,2.5 M961,673 l2.5,-2.5 l2.5,2.5" fill="none" stroke="#666" stroke-width="0.9"/>
<path d="M961,680 l2.5,2.5 l2.5,-2.5 M961,683 l2.5,2.5 l2.5,-2.5" fill="none" stroke="#666" stroke-width="0.9"/>
<path d="M420.5,543.5 v11 l2.6,-2.4 l1.8,4 l1.6,-0.7 l-1.8,-3.9 h3.6 z" fill="#fff" stroke="#222" stroke-width="0.8"/>
<defs><filter id="bl1" x="-5%" y="-5%" width="110%" height="110%"><feGaussianBlur stdDeviation="1.3"/></filter><filter id="bl2" x="-10%" y="-10%" width="120%" height="120%"><feGaussianBlur stdDeviation="3.5"/></filter><filter id="bl3"><feGaussianBlur stdDeviation="1.8"/></filter><filter id="bl4" x="-10%" y="-10%" width="120%" height="120%"><feGaussianBlur stdDeviation="1.3"/></filter></defs>
<clipPath id="gp"><rect x="1116" y="62.5" width="163" height="92.5"/></clipPath>
<g clip-path="url(#gp)"><rect x="1116" y="62.5" width="163" height="92.5" fill="#40352e"/>
<g filter="url(#bl1)">
<rect x="1116.0" y="62.5" width="40.0" height="50.0" fill="#4d3b31" opacity="1"/>
<polygon points="1116.0,64.5 1146.0,76.5 1144.0,82.5 1116.0,70.5" fill="#8a6a56"/>
<rect x="1130.0" y="76.5" width="22.0" height="20.0" fill="#6e625a" opacity="1"/>
<rect x="1167.0" y="63.5" width="50.0" height="12.0" fill="#c4c8c4" opacity="1"/>
<rect x="1179.0" y="65.5" width="20.0" height="11.0" fill="#e8eae6" opacity="1"/>
<rect x="1217.0" y="63.5" width="38.0" height="55.0" fill="#332a24" opacity="1"/>
<rect x="1234.0" y="70.5" width="20.0" height="25.0" fill="#5a4a40" opacity="1"/>
<rect x="1255.0" y="62.5" width="16.0" height="50.0" fill="#7a5a48" opacity="1"/>
<rect x="1269.0" y="65.5" width="8.0" height="38.0" fill="#e6e2dc" opacity="1"/>
<rect x="1116.0" y="112.5" width="14.0" height="43.0" fill="#8c8882" opacity="1"/>
<rect x="1228.0" y="114.5" width="51.0" height="41.0" fill="#85807a" opacity="1"/>
<rect x="1228.0" y="117.5" width="51.0" height="1.6" fill="#a8a29a" opacity="1"/>
<rect x="1116.0" y="117.5" width="14.0" height="1.4" fill="#a09a94" opacity="1"/>
<rect x="1228.0" y="123.0" width="51.0" height="1.6" fill="#a8a29a" opacity="1"/>
<rect x="1116.0" y="123.0" width="14.0" height="1.4" fill="#a09a94" opacity="1"/>
<rect x="1228.0" y="128.5" width="51.0" height="1.6" fill="#a8a29a" opacity="1"/>
<rect x="1116.0" y="128.5" width="14.0" height="1.4" fill="#a09a94" opacity="1"/>
<rect x="1228.0" y="134.0" width="51.0" height="1.6" fill="#a8a29a" opacity="1"/>
<rect x="1116.0" y="134.0" width="14.0" height="1.4" fill="#a09a94" opacity="1"/>
<rect x="1228.0" y="139.5" width="51.0" height="1.6" fill="#a8a29a" opacity="1"/>
<rect x="1116.0" y="139.5" width="14.0" height="1.4" fill="#a09a94" opacity="1"/>
<rect x="1228.0" y="145.0" width="51.0" height="1.6" fill="#a8a29a" opacity="1"/>
<rect x="1116.0" y="145.0" width="14.0" height="1.4" fill="#a09a94" opacity="1"/>
<rect x="1228.0" y="150.5" width="51.0" height="1.6" fill="#a8a29a" opacity="1"/>
<rect x="1116.0" y="150.5" width="14.0" height="1.4" fill="#a09a94" opacity="1"/>
<rect x="1264.0" y="107.5" width="15.0" height="25.0" fill="#6e6a66" opacity="1"/>
<ellipse cx="1165.0" cy="84.5" rx="4.2" ry="6.5" fill="#7e8898" opacity="1"/>
<ellipse cx="1165.0" cy="76.5" rx="2.3" ry="2.9" fill="#a88878" opacity="1"/>
<ellipse cx="1177.5" cy="84.5" rx="4.2" ry="6.5" fill="#949cac" opacity="1"/>
<ellipse cx="1177.5" cy="76.5" rx="2.3" ry="2.9" fill="#a88878" opacity="1"/>
<ellipse cx="1188.1" cy="84.5" rx="4.2" ry="6.5" fill="#5a5660" opacity="1"/>
<ellipse cx="1188.1" cy="76.5" rx="2.3" ry="2.9" fill="#a88878" opacity="1"/>
<ellipse cx="1200.4" cy="84.5" rx="4.2" ry="6.5" fill="#2e2e38" opacity="1"/>
<ellipse cx="1200.4" cy="76.5" rx="2.3" ry="2.9" fill="#a88878" opacity="1"/>
<ellipse cx="1211.8" cy="84.5" rx="4.2" ry="6.5" fill="#a8acb4" opacity="1"/>
<ellipse cx="1211.8" cy="76.5" rx="2.3" ry="2.9" fill="#a88878" opacity="1"/>
<ellipse cx="1220.9" cy="84.5" rx="4.2" ry="6.5" fill="#3a3a46" opacity="1"/>
<ellipse cx="1220.9" cy="76.5" rx="2.3" ry="2.9" fill="#a88878" opacity="1"/>
<ellipse cx="1232.1" cy="84.5" rx="4.2" ry="6.5" fill="#8898ac" opacity="1"/>
<ellipse cx="1232.1" cy="76.5" rx="2.3" ry="2.9" fill="#a88878" opacity="1"/>
<ellipse cx="1149.3" cy="93.5" rx="4.2" ry="6.5" fill="#a8acb4" opacity="1"/>
<ellipse cx="1149.3" cy="85.5" rx="2.3" ry="2.9" fill="#a88878" opacity="1"/>
<ellipse cx="1158.5" cy="93.5" rx="4.2" ry="6.5" fill="#3a3a46" opacity="1"/>
<ellipse cx="1158.5" cy="85.5" rx="2.3" ry="2.9" fill="#a88878" opacity="1"/>
<ellipse cx="1169.9" cy="93.5" rx="4.2" ry="6.5" fill="#8898ac" opacity="1"/>
<ellipse cx="1169.9" cy="85.5" rx="2.3" ry="2.9" fill="#a88878" opacity="1"/>
<ellipse cx="1184.5" cy="93.5" rx="4.2" ry="6.5" fill="#7c8898" opacity="1"/>
<ellipse cx="1184.5" cy="85.5" rx="2.3" ry="2.9" fill="#a88878" opacity="1"/>
<ellipse cx="1193.9" cy="93.5" rx="4.2" ry="6.5" fill="#4e4a4e" opacity="1"/>
<ellipse cx="1193.9" cy="85.5" rx="2.3" ry="2.9" fill="#a88878" opacity="1"/>
<ellipse cx="1206.8" cy="93.5" rx="4.2" ry="6.5" fill="#b4b4bc" opacity="1"/>
<ellipse cx="1206.8" cy="85.5" rx="2.3" ry="2.9" fill="#a88878" opacity="1"/>
<ellipse cx="1216.9" cy="93.5" rx="4.2" ry="6.5" fill="#a08c8c" opacity="1"/>
<ellipse cx="1216.9" cy="85.5" rx="2.3" ry="2.9" fill="#a88878" opacity="1"/>
<ellipse cx="1229.1" cy="93.5" rx="4.2" ry="6.5" fill="#7e8898" opacity="1"/>
<ellipse cx="1229.1" cy="85.5" rx="2.3" ry="2.9" fill="#a88878" opacity="1"/>
<ellipse cx="1238.6" cy="93.5" rx="4.2" ry="6.5" fill="#949cac" opacity="1"/>
<ellipse cx="1238.6" cy="85.5" rx="2.3" ry="2.9" fill="#a88878" opacity="1"/>
<ellipse cx="1144.5" cy="102.5" rx="4.2" ry="6.5" fill="#4e4a4e" opacity="1"/>
<ellipse cx="1144.5" cy="94.5" rx="2.3" ry="2.9" fill="#a88878" opacity="1"/>
<ellipse cx="1158.0" cy="102.5" rx="4.2" ry="6.5" fill="#b4b4bc" opacity="1"/>
<ellipse cx="1158.0" cy="94.5" rx="2.3" ry="2.9" fill="#a88878" opacity="1"/>
<ellipse cx="1169.1" cy="102.5" rx="4.2" ry="6.5" fill="#a08c8c" opacity="1"/>
<ellipse cx="1169.1" cy="94.5" rx="2.3" ry="2.9" fill="#a88878" opacity="1"/>
<ellipse cx="1182.5" cy="102.5" rx="4.2" ry="6.5" fill="#7e8898" opacity="1"/>
<ellipse cx="1182.5" cy="94.5" rx="2.3" ry="2.9" fill="#a88878" opacity="1"/>
<ellipse cx="1194.7" cy="102.5" rx="4.2" ry="6.5" fill="#949cac" opacity="1"/>
<ellipse cx="1194.7" cy="94.5" rx="2.3" ry="2.9" fill="#a88878" opacity="1"/>
<ellipse cx="1204.8" cy="102.5" rx="4.2" ry="6.5" fill="#5a5660" opacity="1"/>
<ellipse cx="1204.8" cy="94.5" rx="2.3" ry="2.9" fill="#a88878" opacity="1"/>
<ellipse cx="1220.0" cy="102.5" rx="4.2" ry="6.5" fill="#2e2e38" opacity="1"/>
<ellipse cx="1220.0" cy="94.5" rx="2.3" ry="2.9" fill="#a88878" opacity="1"/>
<ellipse cx="1231.9" cy="102.5" rx="4.2" ry="6.5" fill="#a8acb4" opacity="1"/>
<ellipse cx="1231.9" cy="94.5" rx="2.3" ry="2.9" fill="#a88878" opacity="1"/>
<ellipse cx="1243.2" cy="102.5" rx="4.2" ry="6.5" fill="#3a3a46" opacity="1"/>
<ellipse cx="1243.2" cy="94.5" rx="2.3" ry="2.9" fill="#a88878" opacity="1"/>
<ellipse cx="1135.0" cy="117.5" rx="10.0" ry="13.0" fill="#a8bcd6" opacity="1"/>
<rect x="1128.0" y="125.5" width="14.0" height="30.0" fill="#6e6c6c" opacity="1"/>
<ellipse cx="1135.0" cy="102.5" rx="3.8" ry="4.5" fill="#c8a090" opacity="1"/>
<ellipse cx="1151.0" cy="119.5" rx="9.0" ry="14.0" fill="#b2b6ba" opacity="1"/>
<rect x="1145.0" y="128.5" width="11.0" height="27.0" fill="#3e3a3a" opacity="1"/>
<ellipse cx="1149.0" cy="105.5" rx="3.6" ry="4.2" fill="#d0b0a4" opacity="1"/>
<ellipse cx="1164.0" cy="118.5" rx="9.0" ry="13.0" fill="#c2c8b2" opacity="1"/>
<rect x="1158.0" y="129.5" width="12.0" height="26.0" fill="#8499c0" opacity="1"/>
<ellipse cx="1164.0" cy="104.0" rx="3.8" ry="4.4" fill="#c49888" opacity="1"/>
<ellipse cx="1179.5" cy="124.5" rx="7.0" ry="16.0" fill="#2e2c34" opacity="1"/>
<ellipse cx="1179.5" cy="107.5" rx="3.6" ry="4.4" fill="#d8c090" opacity="1"/>
<ellipse cx="1192.0" cy="118.5" rx="9.0" ry="14.0" fill="#e8e8ee" opacity="1"/>
<rect x="1186.0" y="130.5" width="12.0" height="25.0" fill="#2e2c30" opacity="1"/>
<rect x="1191.0" y="109.5" width="1.5" height="14.0" fill="#303a60" opacity="1"/>
<ellipse cx="1191.0" cy="103.5" rx="3.6" ry="4.4" fill="#d0a898" opacity="1"/>
<ellipse cx="1208.0" cy="119.5" rx="9.0" ry="13.0" fill="#e0e4ec" opacity="1"/>
<ellipse cx="1208.0" cy="105.5" rx="3.6" ry="4.4" fill="#caa494" opacity="1"/>
<ellipse cx="1226.0" cy="122.5" rx="9.0" ry="20.0" fill="#2e3040" opacity="1"/>
<ellipse cx="1226.0" cy="107.5" rx="3.6" ry="4.4" fill="#c09c8c" opacity="1"/>
<ellipse cx="1213.0" cy="157.5" rx="30.0" ry="20.0" fill="#3a2226" opacity="1"/>
<ellipse cx="1215.5" cy="127.5" rx="9.5" ry="12.0" fill="#c6a596" opacity="1"/>
<ellipse cx="1215.0" cy="120.5" rx="8.0" ry="5.0" fill="#d2b6aa" opacity="1"/>
<rect x="1207.0" y="126.5" width="17.0" height="3.0" fill="#4a3c3c" opacity="1"/>
<ellipse cx="1228.0" cy="152.5" rx="7.0" ry="4.0" fill="#cc3a3a" opacity="1"/>
</g></g>
<clipPath id="mv"><rect x="1116" y="280" width="163" height="92"/></clipPath>
<g clip-path="url(#mv)"><rect x="1116" y="280" width="163" height="92" fill="#c4b49c"/>
<g filter="url(#bl2)">
<rect x="1166.0" y="280.0" width="113.0" height="92.0" fill="#cbbda4" opacity="1"/>
<ellipse cx="1228.0" cy="290.0" rx="40.0" ry="14.0" fill="#eadfc4" opacity="1"/>
<ellipse cx="1266.0" cy="320.0" rx="20.0" ry="40.0" fill="#c2b298" opacity="1"/>
<rect x="1116.0" y="280.0" width="55.0" height="92.0" fill="#857c68" opacity="1"/>
<ellipse cx="1132.0" cy="342.0" rx="20.0" ry="38.0" fill="#6a6252" opacity="1"/>
<ellipse cx="1156.0" cy="295.0" rx="14.0" ry="22.0" fill="#8c8068" opacity="1"/>
<ellipse cx="1178.0" cy="335.0" rx="8.0" ry="12.0" fill="#4a4034" opacity="1"/>
<ellipse cx="1268.0" cy="335.0" rx="12.0" ry="18.0" fill="#9a8468" opacity="1"/>
<ellipse cx="1270.0" cy="362.0" rx="10.0" ry="10.0" fill="#6a98a4" opacity="1"/>
</g><g filter="url(#bl4)">
<clipPath id="shirt"><polygon points="1196.0,337.0 1230.0,337.0 1264.0,360.0 1268.0,375.0 1152.0,375.0 1162.0,358.0"/></clipPath>
<g clip-path="url(#shirt)">
<rect x="1146.0" y="330.0" width="130.0" height="50.0" fill="#4c5c9c" opacity="1"/>
<rect x="1156.0" y="335.0" width="3.0" height="40.0" fill="#c8d6f2" opacity="0.6"/>
<rect x="1167.0" y="335.0" width="3.0" height="40.0" fill="#c8d6f2" opacity="0.6"/>
<rect x="1178.0" y="335.0" width="3.0" height="40.0" fill="#c8d6f2" opacity="0.6"/>
<rect x="1189.0" y="335.0" width="3.0" height="40.0" fill="#c8d6f2" opacity="0.6"/>
<rect x="1200.0" y="335.0" width="3.0" height="40.0" fill="#c8d6f2" opacity="0.6"/>
<rect x="1211.0" y="335.0" width="3.0" height="40.0" fill="#c8d6f2" opacity="0.6"/>
<rect x="1222.0" y="335.0" width="3.0" height="40.0" fill="#c8d6f2" opacity="0.6"/>
<rect x="1233.0" y="335.0" width="3.0" height="40.0" fill="#c8d6f2" opacity="0.6"/>
<rect x="1244.0" y="335.0" width="3.0" height="40.0" fill="#c8d6f2" opacity="0.6"/>
<rect x="1255.0" y="335.0" width="3.0" height="40.0" fill="#c8d6f2" opacity="0.6"/>
<rect x="1146.0" y="342.0" width="130.0" height="1.8" fill="#d0dcf6" opacity="0.45"/>
<rect x="1146.0" y="348.0" width="130.0" height="1.8" fill="#d0dcf6" opacity="0.45"/>
<rect x="1146.0" y="354.0" width="130.0" height="1.8" fill="#d0dcf6" opacity="0.45"/>
<rect x="1146.0" y="360.0" width="130.0" height="1.8" fill="#d0dcf6" opacity="0.45"/>
<rect x="1146.0" y="366.0" width="130.0" height="1.8" fill="#d0dcf6" opacity="0.45"/>
<rect x="1146.0" y="372.0" width="130.0" height="1.8" fill="#d0dcf6" opacity="0.45"/>
<rect x="1182.0" y="350.0" width="10.0" height="6.0" fill="#7a4a6a" opacity="0.7"/>
<rect x="1228.0" y="354.0" width="12.0" height="6.0" fill="#7a4a6a" opacity="0.7"/>
</g>
<ellipse cx="1212.5" cy="340.0" rx="9.0" ry="6.0" fill="#c4b0a4" opacity="1"/>
<ellipse cx="1212.5" cy="307.0" rx="17.0" ry="12.0" fill="#5e5854" opacity="1"/>
<ellipse cx="1212.5" cy="323.0" rx="16.0" ry="21.0" fill="#d6c4b8" opacity="1"/>
<ellipse cx="1207.0" cy="320.0" rx="2.5" ry="1.2" fill="#7a6a64" opacity="1"/>
<ellipse cx="1218.0" cy="320.0" rx="2.5" ry="1.2" fill="#7a6a64" opacity="1"/>
</g></g>
<clipPath id="avolena"><circle cx="1160.5" cy="502.5" r="23.3"/></clipPath>
<g clip-path="url(#avolena)"><g filter="url(#bl3)">
<rect x="1135.5" y="477.5" width="50.0" height="50.0" fill="#6e6a50"/>
<ellipse cx="1144.5" cy="500.5" rx="9.0" ry="16.0" fill="#787650"/>
<ellipse cx="1176.5" cy="504.5" rx="9.0" ry="16.0" fill="#80744e"/>
<ellipse cx="1160.5" cy="489.5" rx="13.0" ry="11.0" fill="#3a302c"/>
<ellipse cx="1160.5" cy="501.5" rx="9.0" ry="12.0" fill="#c29886"/>
<ellipse cx="1160.5" cy="524.5" rx="22.0" ry="10.0" fill="#4c7286"/>
</g></g>
<clipPath id="avvsev"><circle cx="1160.3" cy="575.5" r="23.3"/></clipPath>
<g clip-path="url(#avvsev)"><g filter="url(#bl3)">
<rect x="1135.3" y="550.5" width="50.0" height="50.0" fill="#d8d8d6"/>
<ellipse cx="1160.3" cy="562.5" rx="11.0" ry="8.0" fill="#6a4a34"/>
<ellipse cx="1160.3" cy="572.5" rx="9.0" ry="12.0" fill="#caa08c"/>
<ellipse cx="1160.3" cy="597.5" rx="21.0" ry="10.0" fill="#565a5e"/>
</g></g>
<clipPath id="avoleg"><circle cx="1234" cy="575.5" r="23.3"/></clipPath>
<g clip-path="url(#avoleg)"><g filter="url(#bl3)">
<rect x="1209.0" y="550.5" width="50.0" height="50.0" fill="#8a8a78"/>
<ellipse cx="1220.0" cy="565.5" rx="10.0" ry="14.0" fill="#b8c0c4"/>
<ellipse cx="1250.0" cy="570.5" rx="10.0" ry="16.0" fill="#7a6a3a"/>
<ellipse cx="1234.0" cy="563.5" rx="10.0" ry="6.0" fill="#3a3a40"/>
<ellipse cx="1234.0" cy="574.5" rx="10.0" ry="11.0" fill="#d6b8a6"/>
<ellipse cx="1234.0" cy="597.5" rx="20.0" ry="10.0" fill="#3a2a28"/>
</g></g>
<circle cx="1234" cy="502.5" r="23.3" fill="#dee1db"/>
<text x="1234" y="509.5" font-size="19" text-anchor="middle" fill="#2b362b">АЗ</text>
<clipPath id="bpc"><circle cx="1160.3" cy="649.5" r="23.3"/></clipPath>
<circle cx="1160.3" cy="649.5" r="23.3" fill="#f2e5c6"/>
<rect x="1135" y="666" width="50" height="10" fill="#8e8a7e" clip-path="url(#bpc)"/>
<text x="1160.3" y="656.5" font-size="19" text-anchor="middle" fill="#8a6a26">ВР</text>
<circle cx="1234" cy="649.5" r="23.3" fill="#4b4f93"/>
<text x="1234" y="654.5" font-size="11" font-weight="bold" text-anchor="middle" fill="#f2f2f2">+10</text>
</svg>
<div class="t" style="left:1196px;top:201.2px;font-size:9.4px;color:#e8e8e8;font-weight:bold;transform:translateX(-50%);letter-spacing:0.54px;">Валентин Олександрович...</div>
<div class="t" style="left:1195px;top:418.6px;font-size:9.4px;color:#e8e8e8;font-weight:bold;transform:translateX(-50%);letter-spacing:0.58px;">Володимир Вікторович К...</div>
<div class="t" style="left:1158.2px;top:523.6px;font-size:9.4px;color:#e8e8e8;font-weight:bold;transform:translateX(-50%);letter-spacing:0.46px;">Олена В...</div>
<div class="a" style="left:1203px;top:520px;width:56px;height:17px;background:#6466b2;border-radius:2px"></div>
<div class="t" style="left:1230.5px;top:523.6px;font-size:9.4px;color:#f2f2f2;font-weight:bold;transform:translateX(-50%);letter-spacing:0.5px;">Андрій ...</div>
<div class="t" style="left:1158.8px;top:597.2px;font-size:9.4px;color:#e8e8e8;font-weight:bold;transform:translateX(-50%);letter-spacing:0.3px;">Всеволо...</div>
<div class="t" style="left:1231.2px;top:597.2px;font-size:9.4px;color:#e8e8e8;font-weight:bold;transform:translateX(-50%);letter-spacing:0.38px;">Олег Ол...</div>
<div class="t" style="left:1156.8px;top:670.2px;font-size:9.4px;color:#e8e8e8;font-weight:bold;transform:translateX(-50%);letter-spacing:0.36px;">Володи...</div>
<div class="a" style="left:5px;top:700.5px;width:204px;height:16.5px;background:#6164ab;border-radius:2px"></div>
<div class="t" style="left:9px;top:703.8px;font-size:9.4px;color:#f2f2f2;font-weight:bold;letter-spacing:0.51px;">Андрій Владиславович Заводинський</div>
</body></html>
